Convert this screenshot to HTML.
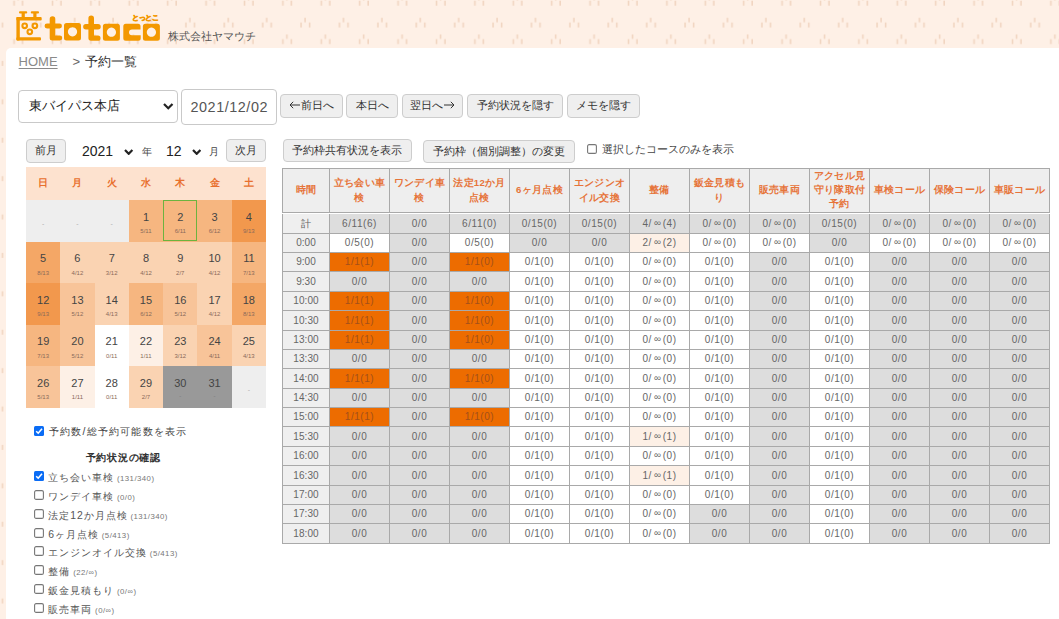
<!DOCTYPE html>
<html lang="ja"><head><meta charset="utf-8"><title>予約一覧</title>
<style>
html,body{margin:0;padding:0}
body{width:1059px;height:619px;overflow:hidden;position:relative;font-family:"Liberation Sans", sans-serif;background:#fef0e6}
.b{position:absolute;display:block}
.t{position:absolute;white-space:nowrap}
.btn{position:absolute;box-sizing:border-box;border:1px solid #cdcdcd;border-radius:4px;background:#efefef;color:#333;text-align:center;white-space:nowrap}
</style></head><body>
<svg class="b" style="left:0;top:0" width="1059" height="619"><defs><pattern id="p" x="-1.2" y="0" width="38.4" height="38.4" patternUnits="userSpaceOnUse">
<g fill="#f1d5c1">
<rect x="14.5" y="0.7" width="1.6" height="5"/><rect x="18.5" y="-4" width="1.6" height="4.5"/><rect x="23" y="0.7" width="1.6" height="5"/>
<rect x="14.5" y="39.1" width="1.6" height="5"/><rect x="18.5" y="34.4" width="1.6" height="4.5"/><rect x="23" y="39.1" width="1.6" height="5"/>
<rect x="32.7" y="22.5" width="1.6" height="5"/><rect x="36.7" y="17.8" width="1.6" height="4.5"/><rect x="41.2" y="22.5" width="1.6" height="5"/>
<rect x="-5.7" y="22.5" width="1.6" height="5"/><rect x="-1.7" y="17.8" width="1.6" height="4.5"/><rect x="2.8" y="22.5" width="1.6" height="5"/>
</g></pattern></defs><rect width="1059" height="619" fill="#fef0e6"/><rect width="1059" height="619" fill="url(#p)"/></svg>
<svg class="b" style="left:0;top:0" width="170" height="48" viewBox="0 0 170 48">
<g fill="#f39800">
<rect x="16.4" y="17.1" width="25.3" height="3.4" rx="1"/>
<rect x="16.4" y="17.1" width="3.4" height="23.4" rx="1"/>
<rect x="16.4" y="37.3" width="24.6" height="3.3" rx="1"/>
<rect x="21.6" y="12" width="3.2" height="6"/>
<rect x="33.3" y="12" width="3.2" height="6"/>
<rect x="19" y="11.3" width="8.2" height="2.3" rx="1"/>
<rect x="30.8" y="11.3" width="8.2" height="2.3" rx="1"/>
</g>
<g fill="none" stroke="#f39800" stroke-width="2.1">
<circle cx="24.7" cy="25.8" r="2.3"/><circle cx="34.9" cy="25.8" r="2.3"/><circle cx="29.8" cy="31.8" r="2.3"/>
</g>
<g fill="#f39800">
<path d="M49.7 19 a2.8 2.8 0 0 1 5.6 0 V23.5 H59.5 a2.4 2.4 0 0 1 0 4.9 H55.3 V35.6 H59.8 a2.45 2.45 0 0 1 0 4.9 H52.2 a2.5 2.5 0 0 1 -2.5 -2.5 V28.4 H47 a2.45 2.45 0 0 1 0 -4.9 H49.7 Z"/>
<path d="M88.4 18.4 a2.8 2.8 0 0 1 5.6 0 V24.1 H98 a2.7 2.7 0 0 1 0 5.5 H94 V35.6 H98 a2.55 2.55 0 0 1 0 5.1 H91 a2.6 2.6 0 0 1 -2.6 -2.6 V29.6 H85.9 a2.75 2.75 0 0 1 0 -5.5 H88.4 Z"/>
<path fill-rule="evenodd" d="M66.5 23.1 H78.5 a2.5 2.5 0 0 1 2.5 2.5 V38 a2.5 2.5 0 0 1 -2.5 2.5 H66.5 a2.5 2.5 0 0 1 -2.5 -2.5 V25.6 a2.5 2.5 0 0 1 2.5 -2.5 Z M72.5 27.2 a4.6 4.6 0 1 0 0.01 0 Z"/>
<path fill-rule="evenodd" d="M105.4 23.7 H117.4 a2.5 2.5 0 0 1 2.5 2.5 V38.2 a2.5 2.5 0 0 1 -2.5 2.5 H105.4 a2.5 2.5 0 0 1 -2.5 -2.5 V26.2 a2.5 2.5 0 0 1 2.5 -2.5 Z M111.4 27.6 a4.6 4.6 0 1 0 0.01 0 Z"/>
<path d="M125.8 23.7 H138 a2.5 2.5 0 0 1 2.5 2.5 V29.6 H132 a3 3 0 0 0 -3 3 V32.2 a3 3 0 0 0 3 3 H140.7 V38.2 a2.5 2.5 0 0 1 -2.5 2.5 H125.8 a2.5 2.5 0 0 1 -2.5 -2.5 V26.2 a2.5 2.5 0 0 1 2.5 -2.5 Z"/>
<path fill-rule="evenodd" d="M145.4 23.7 H157.4 a2.5 2.5 0 0 1 2.5 2.5 V38.2 a2.5 2.5 0 0 1 -2.5 2.5 H145.4 a2.5 2.5 0 0 1 -2.5 -2.5 V26.2 a2.5 2.5 0 0 1 2.5 -2.5 Z M151.4 27.6 a4.6 4.6 0 1 0 0.01 0 Z"/>
</g>
<text x="131.8" y="19.6" font-size="7.4" font-weight="bold" fill="#f39800" stroke="#f39800" stroke-width="0.6" font-family="Liberation Sans" letter-spacing="-0.2">とっとこ</text>
</svg>
<div class="t" style="left:167.8px;top:29px;font-size:11px;line-height:14px;color:#555;letter-spacing:0px;">株式会社ヤマウチ</div>
<div class="b" style="left:6px;top:48px;width:1060px;height:580px;background:#fff;border-top-left-radius:5px"></div>
<div class="t" style="left:18.6px;top:53.5px;font-size:13px;line-height:16px;color:#8a8a8a;letter-spacing:0px;"><span style="text-decoration:underline;text-underline-offset:2px">HOME</span></div>
<div class="t" style="left:72.5px;top:53.5px;font-size:13px;line-height:16px;color:#666;letter-spacing:0px;">&gt;</div>
<div class="t" style="left:85.3px;top:53.5px;font-size:13px;line-height:16px;color:#333;letter-spacing:0px;">予約一覧</div>
<div class="b" style="left:18px;top:90px;width:159.5px;height:32.5px;border:1px solid #c9c9c9;border-radius:4px;box-sizing:border-box;background:#fff"></div>
<div class="t" style="left:28.8px;top:98.2px;font-size:12.6px;line-height:16px;color:#222;letter-spacing:0px;">東バイパス本店</div>
<svg class="b" style="left:163px;top:103px" width="10.5" height="6.5" viewBox="0 0 10.5 6.5"><path d="M1 1 L5.25 5.3 L9.5 1" fill="none" stroke="#222" stroke-width="2.2" stroke-linecap="butt"/></svg>
<div class="b" style="left:181px;top:89.3px;width:95.5px;height:35.3px;border:1px solid #c9c9c9;border-radius:4px;box-sizing:border-box;background:#fff"></div>
<div class="t" style="left:190.5px;top:98.5px;font-size:14.4px;line-height:17px;color:#555;letter-spacing:0.55px;">2021/12/02</div>
<div class="btn" style="left:280.4px;top:94.3px;width:62.200000000000045px;height:23.299999999999997px;font-size:11.2px;line-height:20.299999999999997px;letter-spacing:0px"><svg width="11" height="8" style="vertical-align:0px;margin-right:0.5px" viewBox="0 0 11 8"><path d="M1 4H11M4.2 0.8L1 4L4.2 7.2" fill="none" stroke="#333" stroke-width="1"/></svg>前日へ</div>
<div class="btn" style="left:346.4px;top:94.3px;width:51.80000000000001px;height:23.299999999999997px;font-size:11.2px;line-height:20.299999999999997px;letter-spacing:0px">本日へ</div>
<div class="btn" style="left:401.5px;top:94.3px;width:61.89999999999998px;height:23.299999999999997px;font-size:11.2px;line-height:20.299999999999997px;letter-spacing:0px">翌日へ<svg width="11" height="8" style="vertical-align:0px;margin-left:0.5px" viewBox="0 0 11 8"><path d="M0 4H10M6.8 0.8L10 4L6.8 7.2" fill="none" stroke="#333" stroke-width="1"/></svg></div>
<div class="btn" style="left:467.2px;top:94.3px;width:96.30000000000001px;height:23.299999999999997px;font-size:11.2px;line-height:20.299999999999997px;letter-spacing:0px">予約状況を隠す</div>
<div class="btn" style="left:567.3px;top:94.3px;width:73.0px;height:23.299999999999997px;font-size:11.2px;line-height:20.299999999999997px;letter-spacing:0px">メモを隠す</div>
<div class="btn" style="left:26.1px;top:139.3px;width:39.6px;height:23.299999999999983px;font-size:11.2px;line-height:20.299999999999983px;letter-spacing:0px">前月</div>
<div class="t" style="left:82px;top:143px;font-size:14px;line-height:16px;color:#222;letter-spacing:0px;">2021</div>
<svg class="b" style="left:124.3px;top:148.5px" width="9.399999999999991" height="6.0" viewBox="0 0 9.399999999999991 6.0"><path d="M1 1 L4.699999999999996 4.8 L8.399999999999991 1" fill="none" stroke="#222" stroke-width="2.2" stroke-linecap="butt"/></svg>
<div class="t" style="left:142px;top:145.5px;font-size:10px;line-height:12px;color:#444;letter-spacing:0px;">年</div>
<div class="t" style="left:166px;top:143px;font-size:14px;line-height:16px;color:#222;letter-spacing:0px;">12</div>
<svg class="b" style="left:191.6px;top:148.5px" width="9.400000000000006" height="6.0" viewBox="0 0 9.400000000000006 6.0"><path d="M1 1 L4.700000000000003 4.8 L8.400000000000006 1" fill="none" stroke="#222" stroke-width="2.2" stroke-linecap="butt"/></svg>
<div class="t" style="left:209px;top:145.5px;font-size:10px;line-height:12px;color:#444;letter-spacing:0px;">月</div>
<div class="btn" style="left:226.3px;top:139.2px;width:39.39999999999998px;height:23.0px;font-size:11.2px;line-height:20.0px;letter-spacing:0px">次月</div>
<div class="btn" style="left:282.5px;top:139.3px;width:129.10000000000002px;height:23.099999999999994px;font-size:11.2px;line-height:20.099999999999994px;letter-spacing:0px">予約枠共有状況を表示</div>
<div class="btn" style="left:423.3px;top:139.6px;width:152.09999999999997px;height:23.0px;font-size:11.2px;line-height:20.0px;letter-spacing:0px">予約枠（個別調整）の変更</div>
<svg class="b" style="left:587px;top:144px" width="10" height="10" viewBox="0 0 10 10"><rect x="0.6" y="0.6" width="8.8" height="8.8" rx="1.5" fill="#fff" stroke="#777" stroke-width="1.1"/></svg>
<div class="t" style="left:601.5px;top:143px;font-size:11px;line-height:13px;color:#444;letter-spacing:0px;">選択したコースのみを表示</div>
<div class="b" style="left:26px;top:167px;width:240px;height:33px;background:#fde2cf"></div>
<div class="t" style="left:26.0px;top:175.5px;width:34.285714285714285px;text-align:center;font-size:10.4px;line-height:13px;color:#e8702e;letter-spacing:0px;font-weight:bold;">日</div>
<div class="t" style="left:60.285714285714285px;top:175.5px;width:34.285714285714285px;text-align:center;font-size:10.4px;line-height:13px;color:#e8702e;letter-spacing:0px;font-weight:bold;">月</div>
<div class="t" style="left:94.57142857142857px;top:175.5px;width:34.285714285714285px;text-align:center;font-size:10.4px;line-height:13px;color:#e8702e;letter-spacing:0px;font-weight:bold;">火</div>
<div class="t" style="left:128.85714285714286px;top:175.5px;width:34.285714285714285px;text-align:center;font-size:10.4px;line-height:13px;color:#e8702e;letter-spacing:0px;font-weight:bold;">水</div>
<div class="t" style="left:163.14285714285714px;top:175.5px;width:34.285714285714285px;text-align:center;font-size:10.4px;line-height:13px;color:#e8702e;letter-spacing:0px;font-weight:bold;">木</div>
<div class="t" style="left:197.42857142857142px;top:175.5px;width:34.285714285714285px;text-align:center;font-size:10.4px;line-height:13px;color:#e8702e;letter-spacing:0px;font-weight:bold;">金</div>
<div class="t" style="left:231.71428571428572px;top:175.5px;width:34.285714285714285px;text-align:center;font-size:10.4px;line-height:13px;color:#e8702e;letter-spacing:0px;font-weight:bold;">土</div>
<div class="b" style="left:26.0px;top:200.0px;width:34.58571428571428px;height:41.9px;background:#eeeeee"></div>
<div class="t" style="left:26.0px;top:219.0px;width:34.285714285714285px;text-align:center;font-size:7px;line-height:9px;color:#b0b0b0;letter-spacing:0px;">-</div>
<div class="b" style="left:60.285714285714285px;top:200.0px;width:34.58571428571428px;height:41.9px;background:#eeeeee"></div>
<div class="t" style="left:60.285714285714285px;top:219.0px;width:34.285714285714285px;text-align:center;font-size:7px;line-height:9px;color:#b0b0b0;letter-spacing:0px;">-</div>
<div class="b" style="left:94.57142857142857px;top:200.0px;width:34.58571428571428px;height:41.9px;background:#eeeeee"></div>
<div class="t" style="left:94.57142857142857px;top:219.0px;width:34.285714285714285px;text-align:center;font-size:7px;line-height:9px;color:#b0b0b0;letter-spacing:0px;">-</div>
<div class="b" style="left:128.85714285714286px;top:200.0px;width:34.58571428571428px;height:41.9px;background:rgb(246,182,128)"></div>
<div class="t" style="left:128.85714285714286px;top:210.5px;width:34.285714285714285px;text-align:center;font-size:11px;line-height:13px;color:#444;letter-spacing:0px;">1</div>
<div class="t" style="left:128.85714285714286px;top:228.0px;width:34.285714285714285px;text-align:center;font-size:6px;line-height:7px;color:#8a6a5a;letter-spacing:0px;">5/11</div>
<div class="b" style="left:163.14285714285714px;top:200.0px;width:34.58571428571428px;height:41.9px;background:rgb(246,182,128)"></div>
<div class="t" style="left:163.14285714285714px;top:210.5px;width:34.285714285714285px;text-align:center;font-size:11px;line-height:13px;color:#444;letter-spacing:0px;">2</div>
<div class="t" style="left:163.14285714285714px;top:228.0px;width:34.285714285714285px;text-align:center;font-size:6px;line-height:7px;color:#8a6a5a;letter-spacing:0px;">6/11</div>
<div class="b" style="left:197.42857142857142px;top:200.0px;width:34.58571428571428px;height:41.9px;background:rgb(246,182,128)"></div>
<div class="t" style="left:197.42857142857142px;top:210.5px;width:34.285714285714285px;text-align:center;font-size:11px;line-height:13px;color:#444;letter-spacing:0px;">3</div>
<div class="t" style="left:197.42857142857142px;top:228.0px;width:34.285714285714285px;text-align:center;font-size:6px;line-height:7px;color:#8a6a5a;letter-spacing:0px;">6/12</div>
<div class="b" style="left:231.71428571428572px;top:200.0px;width:34.58571428571428px;height:41.9px;background:rgb(242,152,77)"></div>
<div class="t" style="left:231.71428571428572px;top:210.5px;width:34.285714285714285px;text-align:center;font-size:11px;line-height:13px;color:#444;letter-spacing:0px;">4</div>
<div class="t" style="left:231.71428571428572px;top:228.0px;width:34.285714285714285px;text-align:center;font-size:6px;line-height:7px;color:#8a6a5a;letter-spacing:0px;">9/13</div>
<div class="b" style="left:26.0px;top:241.6px;width:34.58571428571428px;height:41.9px;background:rgb(244,167,102)"></div>
<div class="t" style="left:26.0px;top:252.1px;width:34.285714285714285px;text-align:center;font-size:11px;line-height:13px;color:#444;letter-spacing:0px;">5</div>
<div class="t" style="left:26.0px;top:269.6px;width:34.285714285714285px;text-align:center;font-size:6px;line-height:7px;color:#8a6a5a;letter-spacing:0px;">8/13</div>
<div class="b" style="left:60.285714285714285px;top:241.6px;width:34.58571428571428px;height:41.9px;background:rgb(250,211,178)"></div>
<div class="t" style="left:60.285714285714285px;top:252.1px;width:34.285714285714285px;text-align:center;font-size:11px;line-height:13px;color:#444;letter-spacing:0px;">6</div>
<div class="t" style="left:60.285714285714285px;top:269.6px;width:34.285714285714285px;text-align:center;font-size:6px;line-height:7px;color:#8a6a5a;letter-spacing:0px;">4/12</div>
<div class="b" style="left:94.57142857142857px;top:241.6px;width:34.58571428571428px;height:41.9px;background:rgb(250,211,178)"></div>
<div class="t" style="left:94.57142857142857px;top:252.1px;width:34.285714285714285px;text-align:center;font-size:11px;line-height:13px;color:#444;letter-spacing:0px;">7</div>
<div class="t" style="left:94.57142857142857px;top:269.6px;width:34.285714285714285px;text-align:center;font-size:6px;line-height:7px;color:#8a6a5a;letter-spacing:0px;">3/12</div>
<div class="b" style="left:128.85714285714286px;top:241.6px;width:34.58571428571428px;height:41.9px;background:rgb(250,211,178)"></div>
<div class="t" style="left:128.85714285714286px;top:252.1px;width:34.285714285714285px;text-align:center;font-size:11px;line-height:13px;color:#444;letter-spacing:0px;">8</div>
<div class="t" style="left:128.85714285714286px;top:269.6px;width:34.285714285714285px;text-align:center;font-size:6px;line-height:7px;color:#8a6a5a;letter-spacing:0px;">4/12</div>
<div class="b" style="left:163.14285714285714px;top:241.6px;width:34.58571428571428px;height:41.9px;background:rgb(250,211,178)"></div>
<div class="t" style="left:163.14285714285714px;top:252.1px;width:34.285714285714285px;text-align:center;font-size:11px;line-height:13px;color:#444;letter-spacing:0px;">9</div>
<div class="t" style="left:163.14285714285714px;top:269.6px;width:34.285714285714285px;text-align:center;font-size:6px;line-height:7px;color:#8a6a5a;letter-spacing:0px;">2/7</div>
<div class="b" style="left:197.42857142857142px;top:241.6px;width:34.58571428571428px;height:41.9px;background:rgb(250,211,178)"></div>
<div class="t" style="left:197.42857142857142px;top:252.1px;width:34.285714285714285px;text-align:center;font-size:11px;line-height:13px;color:#444;letter-spacing:0px;">10</div>
<div class="t" style="left:197.42857142857142px;top:269.6px;width:34.285714285714285px;text-align:center;font-size:6px;line-height:7px;color:#8a6a5a;letter-spacing:0px;">4/12</div>
<div class="b" style="left:231.71428571428572px;top:241.6px;width:34.58571428571428px;height:41.9px;background:rgb(246,182,128)"></div>
<div class="t" style="left:231.71428571428572px;top:252.1px;width:34.285714285714285px;text-align:center;font-size:11px;line-height:13px;color:#444;letter-spacing:0px;">11</div>
<div class="t" style="left:231.71428571428572px;top:269.6px;width:34.285714285714285px;text-align:center;font-size:6px;line-height:7px;color:#8a6a5a;letter-spacing:0px;">7/13</div>
<div class="b" style="left:26.0px;top:283.2px;width:34.58571428571428px;height:41.9px;background:rgb(242,152,77)"></div>
<div class="t" style="left:26.0px;top:293.7px;width:34.285714285714285px;text-align:center;font-size:11px;line-height:13px;color:#444;letter-spacing:0px;">12</div>
<div class="t" style="left:26.0px;top:311.2px;width:34.285714285714285px;text-align:center;font-size:6px;line-height:7px;color:#8a6a5a;letter-spacing:0px;">9/13</div>
<div class="b" style="left:60.285714285714285px;top:283.2px;width:34.58571428571428px;height:41.9px;background:rgb(248,196,153)"></div>
<div class="t" style="left:60.285714285714285px;top:293.7px;width:34.285714285714285px;text-align:center;font-size:11px;line-height:13px;color:#444;letter-spacing:0px;">13</div>
<div class="t" style="left:60.285714285714285px;top:311.2px;width:34.285714285714285px;text-align:center;font-size:6px;line-height:7px;color:#8a6a5a;letter-spacing:0px;">5/12</div>
<div class="b" style="left:94.57142857142857px;top:283.2px;width:34.58571428571428px;height:41.9px;background:rgb(250,211,178)"></div>
<div class="t" style="left:94.57142857142857px;top:293.7px;width:34.285714285714285px;text-align:center;font-size:11px;line-height:13px;color:#444;letter-spacing:0px;">14</div>
<div class="t" style="left:94.57142857142857px;top:311.2px;width:34.285714285714285px;text-align:center;font-size:6px;line-height:7px;color:#8a6a5a;letter-spacing:0px;">4/13</div>
<div class="b" style="left:128.85714285714286px;top:283.2px;width:34.58571428571428px;height:41.9px;background:rgb(246,182,128)"></div>
<div class="t" style="left:128.85714285714286px;top:293.7px;width:34.285714285714285px;text-align:center;font-size:11px;line-height:13px;color:#444;letter-spacing:0px;">15</div>
<div class="t" style="left:128.85714285714286px;top:311.2px;width:34.285714285714285px;text-align:center;font-size:6px;line-height:7px;color:#8a6a5a;letter-spacing:0px;">6/12</div>
<div class="b" style="left:163.14285714285714px;top:283.2px;width:34.58571428571428px;height:41.9px;background:rgb(248,196,153)"></div>
<div class="t" style="left:163.14285714285714px;top:293.7px;width:34.285714285714285px;text-align:center;font-size:11px;line-height:13px;color:#444;letter-spacing:0px;">16</div>
<div class="t" style="left:163.14285714285714px;top:311.2px;width:34.285714285714285px;text-align:center;font-size:6px;line-height:7px;color:#8a6a5a;letter-spacing:0px;">5/12</div>
<div class="b" style="left:197.42857142857142px;top:283.2px;width:34.58571428571428px;height:41.9px;background:rgb(250,211,178)"></div>
<div class="t" style="left:197.42857142857142px;top:293.7px;width:34.285714285714285px;text-align:center;font-size:11px;line-height:13px;color:#444;letter-spacing:0px;">17</div>
<div class="t" style="left:197.42857142857142px;top:311.2px;width:34.285714285714285px;text-align:center;font-size:6px;line-height:7px;color:#8a6a5a;letter-spacing:0px;">4/12</div>
<div class="b" style="left:231.71428571428572px;top:283.2px;width:34.58571428571428px;height:41.9px;background:rgb(244,167,102)"></div>
<div class="t" style="left:231.71428571428572px;top:293.7px;width:34.285714285714285px;text-align:center;font-size:11px;line-height:13px;color:#444;letter-spacing:0px;">18</div>
<div class="t" style="left:231.71428571428572px;top:311.2px;width:34.285714285714285px;text-align:center;font-size:6px;line-height:7px;color:#8a6a5a;letter-spacing:0px;">8/13</div>
<div class="b" style="left:26.0px;top:324.8px;width:34.58571428571428px;height:41.9px;background:rgb(246,182,128)"></div>
<div class="t" style="left:26.0px;top:335.3px;width:34.285714285714285px;text-align:center;font-size:11px;line-height:13px;color:#444;letter-spacing:0px;">19</div>
<div class="t" style="left:26.0px;top:352.8px;width:34.285714285714285px;text-align:center;font-size:6px;line-height:7px;color:#8a6a5a;letter-spacing:0px;">7/13</div>
<div class="b" style="left:60.285714285714285px;top:324.8px;width:34.58571428571428px;height:41.9px;background:rgb(248,196,153)"></div>
<div class="t" style="left:60.285714285714285px;top:335.3px;width:34.285714285714285px;text-align:center;font-size:11px;line-height:13px;color:#444;letter-spacing:0px;">20</div>
<div class="t" style="left:60.285714285714285px;top:352.8px;width:34.285714285714285px;text-align:center;font-size:6px;line-height:7px;color:#8a6a5a;letter-spacing:0px;">5/12</div>
<div class="b" style="left:94.57142857142857px;top:324.8px;width:34.58571428571428px;height:41.9px;background:rgb(255,255,255)"></div>
<div class="t" style="left:94.57142857142857px;top:335.3px;width:34.285714285714285px;text-align:center;font-size:11px;line-height:13px;color:#444;letter-spacing:0px;">21</div>
<div class="t" style="left:94.57142857142857px;top:352.8px;width:34.285714285714285px;text-align:center;font-size:6px;line-height:7px;color:#8a6a5a;letter-spacing:0px;">0/11</div>
<div class="b" style="left:128.85714285714286px;top:324.8px;width:34.58571428571428px;height:41.9px;background:rgb(253,240,230)"></div>
<div class="t" style="left:128.85714285714286px;top:335.3px;width:34.285714285714285px;text-align:center;font-size:11px;line-height:13px;color:#444;letter-spacing:0px;">22</div>
<div class="t" style="left:128.85714285714286px;top:352.8px;width:34.285714285714285px;text-align:center;font-size:6px;line-height:7px;color:#8a6a5a;letter-spacing:0px;">1/11</div>
<div class="b" style="left:163.14285714285714px;top:324.8px;width:34.58571428571428px;height:41.9px;background:rgb(250,211,178)"></div>
<div class="t" style="left:163.14285714285714px;top:335.3px;width:34.285714285714285px;text-align:center;font-size:11px;line-height:13px;color:#444;letter-spacing:0px;">23</div>
<div class="t" style="left:163.14285714285714px;top:352.8px;width:34.285714285714285px;text-align:center;font-size:6px;line-height:7px;color:#8a6a5a;letter-spacing:0px;">3/12</div>
<div class="b" style="left:197.42857142857142px;top:324.8px;width:34.58571428571428px;height:41.9px;background:rgb(248,196,153)"></div>
<div class="t" style="left:197.42857142857142px;top:335.3px;width:34.285714285714285px;text-align:center;font-size:11px;line-height:13px;color:#444;letter-spacing:0px;">24</div>
<div class="t" style="left:197.42857142857142px;top:352.8px;width:34.285714285714285px;text-align:center;font-size:6px;line-height:7px;color:#8a6a5a;letter-spacing:0px;">4/11</div>
<div class="b" style="left:231.71428571428572px;top:324.8px;width:34.58571428571428px;height:41.9px;background:rgb(250,211,178)"></div>
<div class="t" style="left:231.71428571428572px;top:335.3px;width:34.285714285714285px;text-align:center;font-size:11px;line-height:13px;color:#444;letter-spacing:0px;">25</div>
<div class="t" style="left:231.71428571428572px;top:352.8px;width:34.285714285714285px;text-align:center;font-size:6px;line-height:7px;color:#8a6a5a;letter-spacing:0px;">4/13</div>
<div class="b" style="left:26.0px;top:366.4px;width:34.58571428571428px;height:41.9px;background:rgb(248,196,153)"></div>
<div class="t" style="left:26.0px;top:376.9px;width:34.285714285714285px;text-align:center;font-size:11px;line-height:13px;color:#444;letter-spacing:0px;">26</div>
<div class="t" style="left:26.0px;top:394.4px;width:34.285714285714285px;text-align:center;font-size:6px;line-height:7px;color:#8a6a5a;letter-spacing:0px;">5/13</div>
<div class="b" style="left:60.285714285714285px;top:366.4px;width:34.58571428571428px;height:41.9px;background:rgb(253,240,230)"></div>
<div class="t" style="left:60.285714285714285px;top:376.9px;width:34.285714285714285px;text-align:center;font-size:11px;line-height:13px;color:#444;letter-spacing:0px;">27</div>
<div class="t" style="left:60.285714285714285px;top:394.4px;width:34.285714285714285px;text-align:center;font-size:6px;line-height:7px;color:#8a6a5a;letter-spacing:0px;">1/11</div>
<div class="b" style="left:94.57142857142857px;top:366.4px;width:34.58571428571428px;height:41.9px;background:rgb(255,255,255)"></div>
<div class="t" style="left:94.57142857142857px;top:376.9px;width:34.285714285714285px;text-align:center;font-size:11px;line-height:13px;color:#444;letter-spacing:0px;">28</div>
<div class="t" style="left:94.57142857142857px;top:394.4px;width:34.285714285714285px;text-align:center;font-size:6px;line-height:7px;color:#8a6a5a;letter-spacing:0px;">0/11</div>
<div class="b" style="left:128.85714285714286px;top:366.4px;width:34.58571428571428px;height:41.9px;background:rgb(250,211,178)"></div>
<div class="t" style="left:128.85714285714286px;top:376.9px;width:34.285714285714285px;text-align:center;font-size:11px;line-height:13px;color:#444;letter-spacing:0px;">29</div>
<div class="t" style="left:128.85714285714286px;top:394.4px;width:34.285714285714285px;text-align:center;font-size:6px;line-height:7px;color:#8a6a5a;letter-spacing:0px;">2/7</div>
<div class="b" style="left:163.14285714285714px;top:366.4px;width:34.58571428571428px;height:41.9px;background:#999999"></div>
<div class="t" style="left:163.14285714285714px;top:377.4px;width:34.285714285714285px;text-align:center;font-size:11px;line-height:13px;color:#444;letter-spacing:0px;">30</div>
<div class="t" style="left:163.14285714285714px;top:392.4px;width:34.285714285714285px;text-align:center;font-size:6px;line-height:8px;color:#777;letter-spacing:0px;">-</div>
<div class="b" style="left:197.42857142857142px;top:366.4px;width:34.58571428571428px;height:41.9px;background:#999999"></div>
<div class="t" style="left:197.42857142857142px;top:377.4px;width:34.285714285714285px;text-align:center;font-size:11px;line-height:13px;color:#444;letter-spacing:0px;">31</div>
<div class="t" style="left:197.42857142857142px;top:392.4px;width:34.285714285714285px;text-align:center;font-size:6px;line-height:8px;color:#777;letter-spacing:0px;">-</div>
<div class="b" style="left:231.71428571428572px;top:366.4px;width:34.58571428571428px;height:41.9px;background:#eeeeee"></div>
<div class="t" style="left:231.71428571428572px;top:385.4px;width:34.285714285714285px;text-align:center;font-size:7px;line-height:9px;color:#b0b0b0;letter-spacing:0px;">-</div>
<div class="b" style="left:163.1px;top:200.3px;width:33.8px;height:40.8px;border:1px solid #6cb33f;box-sizing:border-box"></div>
<svg class="b" style="left:34px;top:426px" width="10" height="10" viewBox="0 0 10 10"><rect x="0" y="0" width="10" height="10" rx="1.5" fill="#0a6cf5"/><path d="M2.2 5.2 L4.2 7.2 L8 2.8" fill="none" stroke="#fff" stroke-width="1.6"/></svg>
<div class="t" style="left:49px;top:424.5px;font-size:10.4px;line-height:13px;color:#444;letter-spacing:1.2px;">予約数/総予約可能数を表示</div>
<div class="t" style="left:85.5px;top:450.5px;font-size:10.4px;line-height:13px;color:#333;letter-spacing:0.75px;font-weight:bold;">予約状況の確認</div>
<svg class="b" style="left:34px;top:471px" width="10" height="10" viewBox="0 0 10 10"><rect x="0" y="0" width="10" height="10" rx="1.5" fill="#0a6cf5"/><path d="M2.2 5.2 L4.2 7.2 L8 2.8" fill="none" stroke="#fff" stroke-width="1.6"/></svg>
<div class="t" style="left:48.3px;top:470.8px;font-size:10.4px;line-height:13px;color:#555;letter-spacing:0.95px">立ち会い車検<span style="font-size:7.8px;letter-spacing:0.45px;color:#777;margin-left:3px">(131/340)</span></div>
<svg class="b" style="left:34px;top:490px" width="10" height="10" viewBox="0 0 10 10"><rect x="0.6" y="0.6" width="8.8" height="8.8" rx="1.5" fill="#fff" stroke="#777" stroke-width="1.1"/></svg>
<div class="t" style="left:48.3px;top:490.0px;font-size:10.4px;line-height:13px;color:#555;letter-spacing:0.95px">ワンデイ車検<span style="font-size:7.8px;letter-spacing:0.45px;color:#777;margin-left:3px">(0/0)</span></div>
<svg class="b" style="left:34px;top:509px" width="10" height="10" viewBox="0 0 10 10"><rect x="0.6" y="0.6" width="8.8" height="8.8" rx="1.5" fill="#fff" stroke="#777" stroke-width="1.1"/></svg>
<div class="t" style="left:48.3px;top:509.1px;font-size:10.4px;line-height:13px;color:#555;letter-spacing:0.95px">法定12か月点検<span style="font-size:7.8px;letter-spacing:0.45px;color:#777;margin-left:3px">(131/340)</span></div>
<svg class="b" style="left:34px;top:528px" width="10" height="10" viewBox="0 0 10 10"><rect x="0.6" y="0.6" width="8.8" height="8.8" rx="1.5" fill="#fff" stroke="#777" stroke-width="1.1"/></svg>
<div class="t" style="left:48.3px;top:527.8px;font-size:10.4px;line-height:13px;color:#555;letter-spacing:0.95px">6ヶ月点検<span style="font-size:7.8px;letter-spacing:0.45px;color:#777;margin-left:3px">(5/413)</span></div>
<svg class="b" style="left:34px;top:546px" width="10" height="10" viewBox="0 0 10 10"><rect x="0.6" y="0.6" width="8.8" height="8.8" rx="1.5" fill="#fff" stroke="#777" stroke-width="1.1"/></svg>
<div class="t" style="left:48.3px;top:546.4px;font-size:10.4px;line-height:13px;color:#555;letter-spacing:0.95px">エンジンオイル交換<span style="font-size:7.8px;letter-spacing:0.45px;color:#777;margin-left:3px">(5/413)</span></div>
<svg class="b" style="left:34px;top:565px" width="10" height="10" viewBox="0 0 10 10"><rect x="0.6" y="0.6" width="8.8" height="8.8" rx="1.5" fill="#fff" stroke="#777" stroke-width="1.1"/></svg>
<div class="t" style="left:48.3px;top:565.3px;font-size:10.4px;line-height:13px;color:#555;letter-spacing:0.95px">整備<span style="font-size:7.8px;letter-spacing:0.45px;color:#777;margin-left:3px">(22/∞)</span></div>
<svg class="b" style="left:34px;top:584px" width="10" height="10" viewBox="0 0 10 10"><rect x="0.6" y="0.6" width="8.8" height="8.8" rx="1.5" fill="#fff" stroke="#777" stroke-width="1.1"/></svg>
<div class="t" style="left:48.3px;top:584.3px;font-size:10.4px;line-height:13px;color:#555;letter-spacing:0.95px">鈑金見積もり<span style="font-size:7.8px;letter-spacing:0.45px;color:#777;margin-left:3px">(0/∞)</span></div>
<svg class="b" style="left:34px;top:603px" width="10" height="10" viewBox="0 0 10 10"><rect x="0.6" y="0.6" width="8.8" height="8.8" rx="1.5" fill="#fff" stroke="#777" stroke-width="1.1"/></svg>
<div class="t" style="left:48.3px;top:603.0px;font-size:10.4px;line-height:13px;color:#555;letter-spacing:0.95px">販売車両<span style="font-size:7.8px;letter-spacing:0.45px;color:#777;margin-left:3px">(0/∞)</span></div>
<div class="b" style="left:282px;top:168px;width:768px;height:45px;background:#eeeeee"></div>
<div class="t" style="left:283px;top:183.0px;width:46px;text-align:center;font-size:9.6px;line-height:14.4px;color:#e6743a;letter-spacing:0.3px;font-weight:bold;">時間</div>
<div class="t" style="left:330px;top:174.6px;width:59px;text-align:center;font-size:9.6px;line-height:15.6px;color:#e6743a;letter-spacing:0.3px;font-weight:bold;">立ち会い車<br>検</div>
<div class="t" style="left:390px;top:174.6px;width:59px;text-align:center;font-size:9.6px;line-height:15.6px;color:#e6743a;letter-spacing:0.3px;font-weight:bold;">ワンデイ車<br>検</div>
<div class="t" style="left:450px;top:174.6px;width:59px;text-align:center;font-size:9.6px;line-height:15.6px;color:#e6743a;letter-spacing:0.3px;font-weight:bold;">法定12か月<br>点検</div>
<div class="t" style="left:510px;top:183.0px;width:59px;text-align:center;font-size:9.6px;line-height:14.4px;color:#e6743a;letter-spacing:0.3px;font-weight:bold;">6ヶ月点検</div>
<div class="t" style="left:570px;top:174.6px;width:59px;text-align:center;font-size:9.6px;line-height:15.6px;color:#e6743a;letter-spacing:0.3px;font-weight:bold;">エンジンオ<br>イル交換</div>
<div class="t" style="left:630px;top:183.0px;width:59px;text-align:center;font-size:9.6px;line-height:14.4px;color:#e6743a;letter-spacing:0.3px;font-weight:bold;">整備</div>
<div class="t" style="left:690px;top:174.6px;width:59px;text-align:center;font-size:9.6px;line-height:15.6px;color:#e6743a;letter-spacing:0.3px;font-weight:bold;">鈑金見積も<br>り</div>
<div class="t" style="left:750px;top:183.0px;width:59px;text-align:center;font-size:9.6px;line-height:14.4px;color:#e6743a;letter-spacing:0.3px;font-weight:bold;">販売車両</div>
<div class="t" style="left:810px;top:168.6px;width:59px;text-align:center;font-size:9.6px;line-height:14.4px;color:#e6743a;letter-spacing:0.3px;font-weight:bold;">アクセル見<br>守り隊取付<br>予約</div>
<div class="t" style="left:870px;top:183.0px;width:59px;text-align:center;font-size:9.6px;line-height:14.4px;color:#e6743a;letter-spacing:0.3px;font-weight:bold;">車検コール</div>
<div class="t" style="left:930px;top:183.0px;width:59px;text-align:center;font-size:9.6px;line-height:14.4px;color:#e6743a;letter-spacing:0.3px;font-weight:bold;">保険コール</div>
<div class="t" style="left:990px;top:183.0px;width:59px;text-align:center;font-size:9.6px;line-height:14.4px;color:#e6743a;letter-spacing:0.3px;font-weight:bold;">車販コール</div>
<div class="b" style="left:283px;top:214px;width:46px;height:19px;background:#efefef"></div>
<div class="t" style="left:283px;top:216.9px;width:46px;text-align:center;font-size:10px;line-height:13px;color:#666;letter-spacing:0.05px;">計</div>
<div class="b" style="left:330px;top:214px;width:59px;height:19px;background:#dddddd"></div>
<div class="t" style="left:330px;top:216.9px;width:59px;text-align:center;font-size:10px;line-height:13px;color:#666;letter-spacing:0.55px;">6/11(6)</div>
<div class="b" style="left:390px;top:214px;width:59px;height:19px;background:#dddddd"></div>
<div class="t" style="left:390px;top:216.9px;width:59px;text-align:center;font-size:10px;line-height:13px;color:#666;letter-spacing:0.55px;">0/0</div>
<div class="b" style="left:450px;top:214px;width:59px;height:19px;background:#dddddd"></div>
<div class="t" style="left:450px;top:216.9px;width:59px;text-align:center;font-size:10px;line-height:13px;color:#666;letter-spacing:0.55px;">6/11(0)</div>
<div class="b" style="left:510px;top:214px;width:59px;height:19px;background:#dddddd"></div>
<div class="t" style="left:510px;top:216.9px;width:59px;text-align:center;font-size:10px;line-height:13px;color:#666;letter-spacing:0.55px;">0/15(0)</div>
<div class="b" style="left:570px;top:214px;width:59px;height:19px;background:#dddddd"></div>
<div class="t" style="left:570px;top:216.9px;width:59px;text-align:center;font-size:10px;line-height:13px;color:#666;letter-spacing:0.55px;">0/15(0)</div>
<div class="b" style="left:630px;top:214px;width:59px;height:19px;background:#dddddd"></div>
<div class="t" style="left:630px;top:216.9px;width:59px;text-align:center;font-size:10px;line-height:13px;color:#666;letter-spacing:0.55px;">4/<span style="font-size:9.6px;margin:0 1.9px 0 2.1px;letter-spacing:0;position:relative;top:-1px">∞</span>(4)</div>
<div class="b" style="left:690px;top:214px;width:59px;height:19px;background:#dddddd"></div>
<div class="t" style="left:690px;top:216.9px;width:59px;text-align:center;font-size:10px;line-height:13px;color:#666;letter-spacing:0.55px;">0/<span style="font-size:9.6px;margin:0 1.9px 0 2.1px;letter-spacing:0;position:relative;top:-1px">∞</span>(0)</div>
<div class="b" style="left:750px;top:214px;width:59px;height:19px;background:#dddddd"></div>
<div class="t" style="left:750px;top:216.9px;width:59px;text-align:center;font-size:10px;line-height:13px;color:#666;letter-spacing:0.55px;">0/<span style="font-size:9.6px;margin:0 1.9px 0 2.1px;letter-spacing:0;position:relative;top:-1px">∞</span>(0)</div>
<div class="b" style="left:810px;top:214px;width:59px;height:19px;background:#dddddd"></div>
<div class="t" style="left:810px;top:216.9px;width:59px;text-align:center;font-size:10px;line-height:13px;color:#666;letter-spacing:0.55px;">0/15(0)</div>
<div class="b" style="left:870px;top:214px;width:59px;height:19px;background:#dddddd"></div>
<div class="t" style="left:870px;top:216.9px;width:59px;text-align:center;font-size:10px;line-height:13px;color:#666;letter-spacing:0.55px;">0/<span style="font-size:9.6px;margin:0 1.9px 0 2.1px;letter-spacing:0;position:relative;top:-1px">∞</span>(0)</div>
<div class="b" style="left:930px;top:214px;width:59px;height:19px;background:#dddddd"></div>
<div class="t" style="left:930px;top:216.9px;width:59px;text-align:center;font-size:10px;line-height:13px;color:#666;letter-spacing:0.55px;">0/<span style="font-size:9.6px;margin:0 1.9px 0 2.1px;letter-spacing:0;position:relative;top:-1px">∞</span>(0)</div>
<div class="b" style="left:990px;top:214px;width:59px;height:19px;background:#dddddd"></div>
<div class="t" style="left:990px;top:216.9px;width:59px;text-align:center;font-size:10px;line-height:13px;color:#666;letter-spacing:0.55px;">0/<span style="font-size:9.6px;margin:0 1.9px 0 2.1px;letter-spacing:0;position:relative;top:-1px">∞</span>(0)</div>
<div class="b" style="left:283px;top:234px;width:46px;height:18px;background:#efefef"></div>
<div class="t" style="left:283px;top:236.4px;width:46px;text-align:center;font-size:10px;line-height:13px;color:#666;letter-spacing:0.05px;">0:00</div>
<div class="b" style="left:330px;top:234px;width:59px;height:18px;background:#ffffff"></div>
<div class="t" style="left:330px;top:236.4px;width:59px;text-align:center;font-size:10px;line-height:13px;color:#666;letter-spacing:0.55px;">0/5(0)</div>
<div class="b" style="left:390px;top:234px;width:59px;height:18px;background:#dddddd"></div>
<div class="t" style="left:390px;top:236.4px;width:59px;text-align:center;font-size:10px;line-height:13px;color:#666;letter-spacing:0.55px;">0/0</div>
<div class="b" style="left:450px;top:234px;width:59px;height:18px;background:#ffffff"></div>
<div class="t" style="left:450px;top:236.4px;width:59px;text-align:center;font-size:10px;line-height:13px;color:#666;letter-spacing:0.55px;">0/5(0)</div>
<div class="b" style="left:510px;top:234px;width:59px;height:18px;background:#dddddd"></div>
<div class="t" style="left:510px;top:236.4px;width:59px;text-align:center;font-size:10px;line-height:13px;color:#666;letter-spacing:0.55px;">0/0</div>
<div class="b" style="left:570px;top:234px;width:59px;height:18px;background:#dddddd"></div>
<div class="t" style="left:570px;top:236.4px;width:59px;text-align:center;font-size:10px;line-height:13px;color:#666;letter-spacing:0.55px;">0/0</div>
<div class="b" style="left:630px;top:234px;width:59px;height:18px;background:rgb(253,240,230)"></div>
<div class="t" style="left:630px;top:236.4px;width:59px;text-align:center;font-size:10px;line-height:13px;color:#666;letter-spacing:0.55px;">2/<span style="font-size:9.6px;margin:0 1.9px 0 2.1px;letter-spacing:0;position:relative;top:-1px">∞</span>(2)</div>
<div class="b" style="left:690px;top:234px;width:59px;height:18px;background:#ffffff"></div>
<div class="t" style="left:690px;top:236.4px;width:59px;text-align:center;font-size:10px;line-height:13px;color:#666;letter-spacing:0.55px;">0/<span style="font-size:9.6px;margin:0 1.9px 0 2.1px;letter-spacing:0;position:relative;top:-1px">∞</span>(0)</div>
<div class="b" style="left:750px;top:234px;width:59px;height:18px;background:#ffffff"></div>
<div class="t" style="left:750px;top:236.4px;width:59px;text-align:center;font-size:10px;line-height:13px;color:#666;letter-spacing:0.55px;">0/<span style="font-size:9.6px;margin:0 1.9px 0 2.1px;letter-spacing:0;position:relative;top:-1px">∞</span>(0)</div>
<div class="b" style="left:810px;top:234px;width:59px;height:18px;background:#dddddd"></div>
<div class="t" style="left:810px;top:236.4px;width:59px;text-align:center;font-size:10px;line-height:13px;color:#666;letter-spacing:0.55px;">0/0</div>
<div class="b" style="left:870px;top:234px;width:59px;height:18px;background:#ffffff"></div>
<div class="t" style="left:870px;top:236.4px;width:59px;text-align:center;font-size:10px;line-height:13px;color:#666;letter-spacing:0.55px;">0/<span style="font-size:9.6px;margin:0 1.9px 0 2.1px;letter-spacing:0;position:relative;top:-1px">∞</span>(0)</div>
<div class="b" style="left:930px;top:234px;width:59px;height:18px;background:#ffffff"></div>
<div class="t" style="left:930px;top:236.4px;width:59px;text-align:center;font-size:10px;line-height:13px;color:#666;letter-spacing:0.55px;">0/<span style="font-size:9.6px;margin:0 1.9px 0 2.1px;letter-spacing:0;position:relative;top:-1px">∞</span>(0)</div>
<div class="b" style="left:990px;top:234px;width:59px;height:18px;background:#ffffff"></div>
<div class="t" style="left:990px;top:236.4px;width:59px;text-align:center;font-size:10px;line-height:13px;color:#666;letter-spacing:0.55px;">0/<span style="font-size:9.6px;margin:0 1.9px 0 2.1px;letter-spacing:0;position:relative;top:-1px">∞</span>(0)</div>
<div class="b" style="left:283px;top:253px;width:46px;height:18px;background:#efefef"></div>
<div class="t" style="left:283px;top:255.4px;width:46px;text-align:center;font-size:10px;line-height:13px;color:#666;letter-spacing:0.05px;">9:00</div>
<div class="b" style="left:330px;top:253px;width:59px;height:18px;background:rgb(237,108,0)"></div>
<div class="t" style="left:330px;top:255.4px;width:59px;text-align:center;font-size:10px;line-height:13px;color:#a4501a;letter-spacing:0.55px;">1/1(1)</div>
<div class="b" style="left:390px;top:253px;width:59px;height:18px;background:#dddddd"></div>
<div class="t" style="left:390px;top:255.4px;width:59px;text-align:center;font-size:10px;line-height:13px;color:#666;letter-spacing:0.55px;">0/0</div>
<div class="b" style="left:450px;top:253px;width:59px;height:18px;background:rgb(237,108,0)"></div>
<div class="t" style="left:450px;top:255.4px;width:59px;text-align:center;font-size:10px;line-height:13px;color:#a4501a;letter-spacing:0.55px;">1/1(0)</div>
<div class="b" style="left:510px;top:253px;width:59px;height:18px;background:#ffffff"></div>
<div class="t" style="left:510px;top:255.4px;width:59px;text-align:center;font-size:10px;line-height:13px;color:#666;letter-spacing:0.55px;">0/1(0)</div>
<div class="b" style="left:570px;top:253px;width:59px;height:18px;background:#ffffff"></div>
<div class="t" style="left:570px;top:255.4px;width:59px;text-align:center;font-size:10px;line-height:13px;color:#666;letter-spacing:0.55px;">0/1(0)</div>
<div class="b" style="left:630px;top:253px;width:59px;height:18px;background:#ffffff"></div>
<div class="t" style="left:630px;top:255.4px;width:59px;text-align:center;font-size:10px;line-height:13px;color:#666;letter-spacing:0.55px;">0/<span style="font-size:9.6px;margin:0 1.9px 0 2.1px;letter-spacing:0;position:relative;top:-1px">∞</span>(0)</div>
<div class="b" style="left:690px;top:253px;width:59px;height:18px;background:#ffffff"></div>
<div class="t" style="left:690px;top:255.4px;width:59px;text-align:center;font-size:10px;line-height:13px;color:#666;letter-spacing:0.55px;">0/1(0)</div>
<div class="b" style="left:750px;top:253px;width:59px;height:18px;background:#dddddd"></div>
<div class="t" style="left:750px;top:255.4px;width:59px;text-align:center;font-size:10px;line-height:13px;color:#666;letter-spacing:0.55px;">0/0</div>
<div class="b" style="left:810px;top:253px;width:59px;height:18px;background:#ffffff"></div>
<div class="t" style="left:810px;top:255.4px;width:59px;text-align:center;font-size:10px;line-height:13px;color:#666;letter-spacing:0.55px;">0/1(0)</div>
<div class="b" style="left:870px;top:253px;width:59px;height:18px;background:#dddddd"></div>
<div class="t" style="left:870px;top:255.4px;width:59px;text-align:center;font-size:10px;line-height:13px;color:#666;letter-spacing:0.55px;">0/0</div>
<div class="b" style="left:930px;top:253px;width:59px;height:18px;background:#dddddd"></div>
<div class="t" style="left:930px;top:255.4px;width:59px;text-align:center;font-size:10px;line-height:13px;color:#666;letter-spacing:0.55px;">0/0</div>
<div class="b" style="left:990px;top:253px;width:59px;height:18px;background:#dddddd"></div>
<div class="t" style="left:990px;top:255.4px;width:59px;text-align:center;font-size:10px;line-height:13px;color:#666;letter-spacing:0.55px;">0/0</div>
<div class="b" style="left:283px;top:272px;width:46px;height:19px;background:#efefef"></div>
<div class="t" style="left:283px;top:274.9px;width:46px;text-align:center;font-size:10px;line-height:13px;color:#666;letter-spacing:0.05px;">9:30</div>
<div class="b" style="left:330px;top:272px;width:59px;height:19px;background:#dddddd"></div>
<div class="t" style="left:330px;top:274.9px;width:59px;text-align:center;font-size:10px;line-height:13px;color:#666;letter-spacing:0.55px;">0/0</div>
<div class="b" style="left:390px;top:272px;width:59px;height:19px;background:#dddddd"></div>
<div class="t" style="left:390px;top:274.9px;width:59px;text-align:center;font-size:10px;line-height:13px;color:#666;letter-spacing:0.55px;">0/0</div>
<div class="b" style="left:450px;top:272px;width:59px;height:19px;background:#dddddd"></div>
<div class="t" style="left:450px;top:274.9px;width:59px;text-align:center;font-size:10px;line-height:13px;color:#666;letter-spacing:0.55px;">0/0</div>
<div class="b" style="left:510px;top:272px;width:59px;height:19px;background:#ffffff"></div>
<div class="t" style="left:510px;top:274.9px;width:59px;text-align:center;font-size:10px;line-height:13px;color:#666;letter-spacing:0.55px;">0/1(0)</div>
<div class="b" style="left:570px;top:272px;width:59px;height:19px;background:#ffffff"></div>
<div class="t" style="left:570px;top:274.9px;width:59px;text-align:center;font-size:10px;line-height:13px;color:#666;letter-spacing:0.55px;">0/1(0)</div>
<div class="b" style="left:630px;top:272px;width:59px;height:19px;background:#ffffff"></div>
<div class="t" style="left:630px;top:274.9px;width:59px;text-align:center;font-size:10px;line-height:13px;color:#666;letter-spacing:0.55px;">0/<span style="font-size:9.6px;margin:0 1.9px 0 2.1px;letter-spacing:0;position:relative;top:-1px">∞</span>(0)</div>
<div class="b" style="left:690px;top:272px;width:59px;height:19px;background:#ffffff"></div>
<div class="t" style="left:690px;top:274.9px;width:59px;text-align:center;font-size:10px;line-height:13px;color:#666;letter-spacing:0.55px;">0/1(0)</div>
<div class="b" style="left:750px;top:272px;width:59px;height:19px;background:#dddddd"></div>
<div class="t" style="left:750px;top:274.9px;width:59px;text-align:center;font-size:10px;line-height:13px;color:#666;letter-spacing:0.55px;">0/0</div>
<div class="b" style="left:810px;top:272px;width:59px;height:19px;background:#ffffff"></div>
<div class="t" style="left:810px;top:274.9px;width:59px;text-align:center;font-size:10px;line-height:13px;color:#666;letter-spacing:0.55px;">0/1(0)</div>
<div class="b" style="left:870px;top:272px;width:59px;height:19px;background:#dddddd"></div>
<div class="t" style="left:870px;top:274.9px;width:59px;text-align:center;font-size:10px;line-height:13px;color:#666;letter-spacing:0.55px;">0/0</div>
<div class="b" style="left:930px;top:272px;width:59px;height:19px;background:#dddddd"></div>
<div class="t" style="left:930px;top:274.9px;width:59px;text-align:center;font-size:10px;line-height:13px;color:#666;letter-spacing:0.55px;">0/0</div>
<div class="b" style="left:990px;top:272px;width:59px;height:19px;background:#dddddd"></div>
<div class="t" style="left:990px;top:274.9px;width:59px;text-align:center;font-size:10px;line-height:13px;color:#666;letter-spacing:0.55px;">0/0</div>
<div class="b" style="left:283px;top:292px;width:46px;height:18px;background:#efefef"></div>
<div class="t" style="left:283px;top:294.4px;width:46px;text-align:center;font-size:10px;line-height:13px;color:#666;letter-spacing:0.05px;">10:00</div>
<div class="b" style="left:330px;top:292px;width:59px;height:18px;background:rgb(237,108,0)"></div>
<div class="t" style="left:330px;top:294.4px;width:59px;text-align:center;font-size:10px;line-height:13px;color:#a4501a;letter-spacing:0.55px;">1/1(1)</div>
<div class="b" style="left:390px;top:292px;width:59px;height:18px;background:#dddddd"></div>
<div class="t" style="left:390px;top:294.4px;width:59px;text-align:center;font-size:10px;line-height:13px;color:#666;letter-spacing:0.55px;">0/0</div>
<div class="b" style="left:450px;top:292px;width:59px;height:18px;background:rgb(237,108,0)"></div>
<div class="t" style="left:450px;top:294.4px;width:59px;text-align:center;font-size:10px;line-height:13px;color:#a4501a;letter-spacing:0.55px;">1/1(0)</div>
<div class="b" style="left:510px;top:292px;width:59px;height:18px;background:#ffffff"></div>
<div class="t" style="left:510px;top:294.4px;width:59px;text-align:center;font-size:10px;line-height:13px;color:#666;letter-spacing:0.55px;">0/1(0)</div>
<div class="b" style="left:570px;top:292px;width:59px;height:18px;background:#ffffff"></div>
<div class="t" style="left:570px;top:294.4px;width:59px;text-align:center;font-size:10px;line-height:13px;color:#666;letter-spacing:0.55px;">0/1(0)</div>
<div class="b" style="left:630px;top:292px;width:59px;height:18px;background:#ffffff"></div>
<div class="t" style="left:630px;top:294.4px;width:59px;text-align:center;font-size:10px;line-height:13px;color:#666;letter-spacing:0.55px;">0/<span style="font-size:9.6px;margin:0 1.9px 0 2.1px;letter-spacing:0;position:relative;top:-1px">∞</span>(0)</div>
<div class="b" style="left:690px;top:292px;width:59px;height:18px;background:#ffffff"></div>
<div class="t" style="left:690px;top:294.4px;width:59px;text-align:center;font-size:10px;line-height:13px;color:#666;letter-spacing:0.55px;">0/1(0)</div>
<div class="b" style="left:750px;top:292px;width:59px;height:18px;background:#dddddd"></div>
<div class="t" style="left:750px;top:294.4px;width:59px;text-align:center;font-size:10px;line-height:13px;color:#666;letter-spacing:0.55px;">0/0</div>
<div class="b" style="left:810px;top:292px;width:59px;height:18px;background:#ffffff"></div>
<div class="t" style="left:810px;top:294.4px;width:59px;text-align:center;font-size:10px;line-height:13px;color:#666;letter-spacing:0.55px;">0/1(0)</div>
<div class="b" style="left:870px;top:292px;width:59px;height:18px;background:#dddddd"></div>
<div class="t" style="left:870px;top:294.4px;width:59px;text-align:center;font-size:10px;line-height:13px;color:#666;letter-spacing:0.55px;">0/0</div>
<div class="b" style="left:930px;top:292px;width:59px;height:18px;background:#dddddd"></div>
<div class="t" style="left:930px;top:294.4px;width:59px;text-align:center;font-size:10px;line-height:13px;color:#666;letter-spacing:0.55px;">0/0</div>
<div class="b" style="left:990px;top:292px;width:59px;height:18px;background:#dddddd"></div>
<div class="t" style="left:990px;top:294.4px;width:59px;text-align:center;font-size:10px;line-height:13px;color:#666;letter-spacing:0.55px;">0/0</div>
<div class="b" style="left:283px;top:311px;width:46px;height:19px;background:#efefef"></div>
<div class="t" style="left:283px;top:313.9px;width:46px;text-align:center;font-size:10px;line-height:13px;color:#666;letter-spacing:0.05px;">10:30</div>
<div class="b" style="left:330px;top:311px;width:59px;height:19px;background:rgb(237,108,0)"></div>
<div class="t" style="left:330px;top:313.9px;width:59px;text-align:center;font-size:10px;line-height:13px;color:#a4501a;letter-spacing:0.55px;">1/1(1)</div>
<div class="b" style="left:390px;top:311px;width:59px;height:19px;background:#dddddd"></div>
<div class="t" style="left:390px;top:313.9px;width:59px;text-align:center;font-size:10px;line-height:13px;color:#666;letter-spacing:0.55px;">0/0</div>
<div class="b" style="left:450px;top:311px;width:59px;height:19px;background:rgb(237,108,0)"></div>
<div class="t" style="left:450px;top:313.9px;width:59px;text-align:center;font-size:10px;line-height:13px;color:#a4501a;letter-spacing:0.55px;">1/1(0)</div>
<div class="b" style="left:510px;top:311px;width:59px;height:19px;background:#ffffff"></div>
<div class="t" style="left:510px;top:313.9px;width:59px;text-align:center;font-size:10px;line-height:13px;color:#666;letter-spacing:0.55px;">0/1(0)</div>
<div class="b" style="left:570px;top:311px;width:59px;height:19px;background:#ffffff"></div>
<div class="t" style="left:570px;top:313.9px;width:59px;text-align:center;font-size:10px;line-height:13px;color:#666;letter-spacing:0.55px;">0/1(0)</div>
<div class="b" style="left:630px;top:311px;width:59px;height:19px;background:#ffffff"></div>
<div class="t" style="left:630px;top:313.9px;width:59px;text-align:center;font-size:10px;line-height:13px;color:#666;letter-spacing:0.55px;">0/<span style="font-size:9.6px;margin:0 1.9px 0 2.1px;letter-spacing:0;position:relative;top:-1px">∞</span>(0)</div>
<div class="b" style="left:690px;top:311px;width:59px;height:19px;background:#ffffff"></div>
<div class="t" style="left:690px;top:313.9px;width:59px;text-align:center;font-size:10px;line-height:13px;color:#666;letter-spacing:0.55px;">0/1(0)</div>
<div class="b" style="left:750px;top:311px;width:59px;height:19px;background:#dddddd"></div>
<div class="t" style="left:750px;top:313.9px;width:59px;text-align:center;font-size:10px;line-height:13px;color:#666;letter-spacing:0.55px;">0/0</div>
<div class="b" style="left:810px;top:311px;width:59px;height:19px;background:#ffffff"></div>
<div class="t" style="left:810px;top:313.9px;width:59px;text-align:center;font-size:10px;line-height:13px;color:#666;letter-spacing:0.55px;">0/1(0)</div>
<div class="b" style="left:870px;top:311px;width:59px;height:19px;background:#dddddd"></div>
<div class="t" style="left:870px;top:313.9px;width:59px;text-align:center;font-size:10px;line-height:13px;color:#666;letter-spacing:0.55px;">0/0</div>
<div class="b" style="left:930px;top:311px;width:59px;height:19px;background:#dddddd"></div>
<div class="t" style="left:930px;top:313.9px;width:59px;text-align:center;font-size:10px;line-height:13px;color:#666;letter-spacing:0.55px;">0/0</div>
<div class="b" style="left:990px;top:311px;width:59px;height:19px;background:#dddddd"></div>
<div class="t" style="left:990px;top:313.9px;width:59px;text-align:center;font-size:10px;line-height:13px;color:#666;letter-spacing:0.55px;">0/0</div>
<div class="b" style="left:283px;top:331px;width:46px;height:18px;background:#efefef"></div>
<div class="t" style="left:283px;top:333.4px;width:46px;text-align:center;font-size:10px;line-height:13px;color:#666;letter-spacing:0.05px;">13:00</div>
<div class="b" style="left:330px;top:331px;width:59px;height:18px;background:rgb(237,108,0)"></div>
<div class="t" style="left:330px;top:333.4px;width:59px;text-align:center;font-size:10px;line-height:13px;color:#a4501a;letter-spacing:0.55px;">1/1(1)</div>
<div class="b" style="left:390px;top:331px;width:59px;height:18px;background:#dddddd"></div>
<div class="t" style="left:390px;top:333.4px;width:59px;text-align:center;font-size:10px;line-height:13px;color:#666;letter-spacing:0.55px;">0/0</div>
<div class="b" style="left:450px;top:331px;width:59px;height:18px;background:rgb(237,108,0)"></div>
<div class="t" style="left:450px;top:333.4px;width:59px;text-align:center;font-size:10px;line-height:13px;color:#a4501a;letter-spacing:0.55px;">1/1(0)</div>
<div class="b" style="left:510px;top:331px;width:59px;height:18px;background:#ffffff"></div>
<div class="t" style="left:510px;top:333.4px;width:59px;text-align:center;font-size:10px;line-height:13px;color:#666;letter-spacing:0.55px;">0/1(0)</div>
<div class="b" style="left:570px;top:331px;width:59px;height:18px;background:#ffffff"></div>
<div class="t" style="left:570px;top:333.4px;width:59px;text-align:center;font-size:10px;line-height:13px;color:#666;letter-spacing:0.55px;">0/1(0)</div>
<div class="b" style="left:630px;top:331px;width:59px;height:18px;background:#ffffff"></div>
<div class="t" style="left:630px;top:333.4px;width:59px;text-align:center;font-size:10px;line-height:13px;color:#666;letter-spacing:0.55px;">0/<span style="font-size:9.6px;margin:0 1.9px 0 2.1px;letter-spacing:0;position:relative;top:-1px">∞</span>(0)</div>
<div class="b" style="left:690px;top:331px;width:59px;height:18px;background:#ffffff"></div>
<div class="t" style="left:690px;top:333.4px;width:59px;text-align:center;font-size:10px;line-height:13px;color:#666;letter-spacing:0.55px;">0/1(0)</div>
<div class="b" style="left:750px;top:331px;width:59px;height:18px;background:#dddddd"></div>
<div class="t" style="left:750px;top:333.4px;width:59px;text-align:center;font-size:10px;line-height:13px;color:#666;letter-spacing:0.55px;">0/0</div>
<div class="b" style="left:810px;top:331px;width:59px;height:18px;background:#ffffff"></div>
<div class="t" style="left:810px;top:333.4px;width:59px;text-align:center;font-size:10px;line-height:13px;color:#666;letter-spacing:0.55px;">0/1(0)</div>
<div class="b" style="left:870px;top:331px;width:59px;height:18px;background:#dddddd"></div>
<div class="t" style="left:870px;top:333.4px;width:59px;text-align:center;font-size:10px;line-height:13px;color:#666;letter-spacing:0.55px;">0/0</div>
<div class="b" style="left:930px;top:331px;width:59px;height:18px;background:#dddddd"></div>
<div class="t" style="left:930px;top:333.4px;width:59px;text-align:center;font-size:10px;line-height:13px;color:#666;letter-spacing:0.55px;">0/0</div>
<div class="b" style="left:990px;top:331px;width:59px;height:18px;background:#dddddd"></div>
<div class="t" style="left:990px;top:333.4px;width:59px;text-align:center;font-size:10px;line-height:13px;color:#666;letter-spacing:0.55px;">0/0</div>
<div class="b" style="left:283px;top:350px;width:46px;height:18px;background:#efefef"></div>
<div class="t" style="left:283px;top:352.4px;width:46px;text-align:center;font-size:10px;line-height:13px;color:#666;letter-spacing:0.05px;">13:30</div>
<div class="b" style="left:330px;top:350px;width:59px;height:18px;background:#dddddd"></div>
<div class="t" style="left:330px;top:352.4px;width:59px;text-align:center;font-size:10px;line-height:13px;color:#666;letter-spacing:0.55px;">0/0</div>
<div class="b" style="left:390px;top:350px;width:59px;height:18px;background:#dddddd"></div>
<div class="t" style="left:390px;top:352.4px;width:59px;text-align:center;font-size:10px;line-height:13px;color:#666;letter-spacing:0.55px;">0/0</div>
<div class="b" style="left:450px;top:350px;width:59px;height:18px;background:#dddddd"></div>
<div class="t" style="left:450px;top:352.4px;width:59px;text-align:center;font-size:10px;line-height:13px;color:#666;letter-spacing:0.55px;">0/0</div>
<div class="b" style="left:510px;top:350px;width:59px;height:18px;background:#ffffff"></div>
<div class="t" style="left:510px;top:352.4px;width:59px;text-align:center;font-size:10px;line-height:13px;color:#666;letter-spacing:0.55px;">0/1(0)</div>
<div class="b" style="left:570px;top:350px;width:59px;height:18px;background:#ffffff"></div>
<div class="t" style="left:570px;top:352.4px;width:59px;text-align:center;font-size:10px;line-height:13px;color:#666;letter-spacing:0.55px;">0/1(0)</div>
<div class="b" style="left:630px;top:350px;width:59px;height:18px;background:#ffffff"></div>
<div class="t" style="left:630px;top:352.4px;width:59px;text-align:center;font-size:10px;line-height:13px;color:#666;letter-spacing:0.55px;">0/<span style="font-size:9.6px;margin:0 1.9px 0 2.1px;letter-spacing:0;position:relative;top:-1px">∞</span>(0)</div>
<div class="b" style="left:690px;top:350px;width:59px;height:18px;background:#ffffff"></div>
<div class="t" style="left:690px;top:352.4px;width:59px;text-align:center;font-size:10px;line-height:13px;color:#666;letter-spacing:0.55px;">0/1(0)</div>
<div class="b" style="left:750px;top:350px;width:59px;height:18px;background:#dddddd"></div>
<div class="t" style="left:750px;top:352.4px;width:59px;text-align:center;font-size:10px;line-height:13px;color:#666;letter-spacing:0.55px;">0/0</div>
<div class="b" style="left:810px;top:350px;width:59px;height:18px;background:#ffffff"></div>
<div class="t" style="left:810px;top:352.4px;width:59px;text-align:center;font-size:10px;line-height:13px;color:#666;letter-spacing:0.55px;">0/1(0)</div>
<div class="b" style="left:870px;top:350px;width:59px;height:18px;background:#dddddd"></div>
<div class="t" style="left:870px;top:352.4px;width:59px;text-align:center;font-size:10px;line-height:13px;color:#666;letter-spacing:0.55px;">0/0</div>
<div class="b" style="left:930px;top:350px;width:59px;height:18px;background:#dddddd"></div>
<div class="t" style="left:930px;top:352.4px;width:59px;text-align:center;font-size:10px;line-height:13px;color:#666;letter-spacing:0.55px;">0/0</div>
<div class="b" style="left:990px;top:350px;width:59px;height:18px;background:#dddddd"></div>
<div class="t" style="left:990px;top:352.4px;width:59px;text-align:center;font-size:10px;line-height:13px;color:#666;letter-spacing:0.55px;">0/0</div>
<div class="b" style="left:283px;top:369px;width:46px;height:19px;background:#efefef"></div>
<div class="t" style="left:283px;top:371.9px;width:46px;text-align:center;font-size:10px;line-height:13px;color:#666;letter-spacing:0.05px;">14:00</div>
<div class="b" style="left:330px;top:369px;width:59px;height:19px;background:rgb(237,108,0)"></div>
<div class="t" style="left:330px;top:371.9px;width:59px;text-align:center;font-size:10px;line-height:13px;color:#a4501a;letter-spacing:0.55px;">1/1(1)</div>
<div class="b" style="left:390px;top:369px;width:59px;height:19px;background:#dddddd"></div>
<div class="t" style="left:390px;top:371.9px;width:59px;text-align:center;font-size:10px;line-height:13px;color:#666;letter-spacing:0.55px;">0/0</div>
<div class="b" style="left:450px;top:369px;width:59px;height:19px;background:rgb(237,108,0)"></div>
<div class="t" style="left:450px;top:371.9px;width:59px;text-align:center;font-size:10px;line-height:13px;color:#a4501a;letter-spacing:0.55px;">1/1(0)</div>
<div class="b" style="left:510px;top:369px;width:59px;height:19px;background:#ffffff"></div>
<div class="t" style="left:510px;top:371.9px;width:59px;text-align:center;font-size:10px;line-height:13px;color:#666;letter-spacing:0.55px;">0/1(0)</div>
<div class="b" style="left:570px;top:369px;width:59px;height:19px;background:#ffffff"></div>
<div class="t" style="left:570px;top:371.9px;width:59px;text-align:center;font-size:10px;line-height:13px;color:#666;letter-spacing:0.55px;">0/1(0)</div>
<div class="b" style="left:630px;top:369px;width:59px;height:19px;background:#ffffff"></div>
<div class="t" style="left:630px;top:371.9px;width:59px;text-align:center;font-size:10px;line-height:13px;color:#666;letter-spacing:0.55px;">0/<span style="font-size:9.6px;margin:0 1.9px 0 2.1px;letter-spacing:0;position:relative;top:-1px">∞</span>(0)</div>
<div class="b" style="left:690px;top:369px;width:59px;height:19px;background:#ffffff"></div>
<div class="t" style="left:690px;top:371.9px;width:59px;text-align:center;font-size:10px;line-height:13px;color:#666;letter-spacing:0.55px;">0/1(0)</div>
<div class="b" style="left:750px;top:369px;width:59px;height:19px;background:#dddddd"></div>
<div class="t" style="left:750px;top:371.9px;width:59px;text-align:center;font-size:10px;line-height:13px;color:#666;letter-spacing:0.55px;">0/0</div>
<div class="b" style="left:810px;top:369px;width:59px;height:19px;background:#ffffff"></div>
<div class="t" style="left:810px;top:371.9px;width:59px;text-align:center;font-size:10px;line-height:13px;color:#666;letter-spacing:0.55px;">0/1(0)</div>
<div class="b" style="left:870px;top:369px;width:59px;height:19px;background:#dddddd"></div>
<div class="t" style="left:870px;top:371.9px;width:59px;text-align:center;font-size:10px;line-height:13px;color:#666;letter-spacing:0.55px;">0/0</div>
<div class="b" style="left:930px;top:369px;width:59px;height:19px;background:#dddddd"></div>
<div class="t" style="left:930px;top:371.9px;width:59px;text-align:center;font-size:10px;line-height:13px;color:#666;letter-spacing:0.55px;">0/0</div>
<div class="b" style="left:990px;top:369px;width:59px;height:19px;background:#dddddd"></div>
<div class="t" style="left:990px;top:371.9px;width:59px;text-align:center;font-size:10px;line-height:13px;color:#666;letter-spacing:0.55px;">0/0</div>
<div class="b" style="left:283px;top:389px;width:46px;height:18px;background:#efefef"></div>
<div class="t" style="left:283px;top:391.4px;width:46px;text-align:center;font-size:10px;line-height:13px;color:#666;letter-spacing:0.05px;">14:30</div>
<div class="b" style="left:330px;top:389px;width:59px;height:18px;background:#dddddd"></div>
<div class="t" style="left:330px;top:391.4px;width:59px;text-align:center;font-size:10px;line-height:13px;color:#666;letter-spacing:0.55px;">0/0</div>
<div class="b" style="left:390px;top:389px;width:59px;height:18px;background:#dddddd"></div>
<div class="t" style="left:390px;top:391.4px;width:59px;text-align:center;font-size:10px;line-height:13px;color:#666;letter-spacing:0.55px;">0/0</div>
<div class="b" style="left:450px;top:389px;width:59px;height:18px;background:#dddddd"></div>
<div class="t" style="left:450px;top:391.4px;width:59px;text-align:center;font-size:10px;line-height:13px;color:#666;letter-spacing:0.55px;">0/0</div>
<div class="b" style="left:510px;top:389px;width:59px;height:18px;background:#ffffff"></div>
<div class="t" style="left:510px;top:391.4px;width:59px;text-align:center;font-size:10px;line-height:13px;color:#666;letter-spacing:0.55px;">0/1(0)</div>
<div class="b" style="left:570px;top:389px;width:59px;height:18px;background:#ffffff"></div>
<div class="t" style="left:570px;top:391.4px;width:59px;text-align:center;font-size:10px;line-height:13px;color:#666;letter-spacing:0.55px;">0/1(0)</div>
<div class="b" style="left:630px;top:389px;width:59px;height:18px;background:#ffffff"></div>
<div class="t" style="left:630px;top:391.4px;width:59px;text-align:center;font-size:10px;line-height:13px;color:#666;letter-spacing:0.55px;">0/<span style="font-size:9.6px;margin:0 1.9px 0 2.1px;letter-spacing:0;position:relative;top:-1px">∞</span>(0)</div>
<div class="b" style="left:690px;top:389px;width:59px;height:18px;background:#ffffff"></div>
<div class="t" style="left:690px;top:391.4px;width:59px;text-align:center;font-size:10px;line-height:13px;color:#666;letter-spacing:0.55px;">0/1(0)</div>
<div class="b" style="left:750px;top:389px;width:59px;height:18px;background:#dddddd"></div>
<div class="t" style="left:750px;top:391.4px;width:59px;text-align:center;font-size:10px;line-height:13px;color:#666;letter-spacing:0.55px;">0/0</div>
<div class="b" style="left:810px;top:389px;width:59px;height:18px;background:#ffffff"></div>
<div class="t" style="left:810px;top:391.4px;width:59px;text-align:center;font-size:10px;line-height:13px;color:#666;letter-spacing:0.55px;">0/1(0)</div>
<div class="b" style="left:870px;top:389px;width:59px;height:18px;background:#dddddd"></div>
<div class="t" style="left:870px;top:391.4px;width:59px;text-align:center;font-size:10px;line-height:13px;color:#666;letter-spacing:0.55px;">0/0</div>
<div class="b" style="left:930px;top:389px;width:59px;height:18px;background:#dddddd"></div>
<div class="t" style="left:930px;top:391.4px;width:59px;text-align:center;font-size:10px;line-height:13px;color:#666;letter-spacing:0.55px;">0/0</div>
<div class="b" style="left:990px;top:389px;width:59px;height:18px;background:#dddddd"></div>
<div class="t" style="left:990px;top:391.4px;width:59px;text-align:center;font-size:10px;line-height:13px;color:#666;letter-spacing:0.55px;">0/0</div>
<div class="b" style="left:283px;top:408px;width:46px;height:18px;background:#efefef"></div>
<div class="t" style="left:283px;top:410.4px;width:46px;text-align:center;font-size:10px;line-height:13px;color:#666;letter-spacing:0.05px;">15:00</div>
<div class="b" style="left:330px;top:408px;width:59px;height:18px;background:rgb(237,108,0)"></div>
<div class="t" style="left:330px;top:410.4px;width:59px;text-align:center;font-size:10px;line-height:13px;color:#a4501a;letter-spacing:0.55px;">1/1(1)</div>
<div class="b" style="left:390px;top:408px;width:59px;height:18px;background:#dddddd"></div>
<div class="t" style="left:390px;top:410.4px;width:59px;text-align:center;font-size:10px;line-height:13px;color:#666;letter-spacing:0.55px;">0/0</div>
<div class="b" style="left:450px;top:408px;width:59px;height:18px;background:rgb(237,108,0)"></div>
<div class="t" style="left:450px;top:410.4px;width:59px;text-align:center;font-size:10px;line-height:13px;color:#a4501a;letter-spacing:0.55px;">1/1(0)</div>
<div class="b" style="left:510px;top:408px;width:59px;height:18px;background:#ffffff"></div>
<div class="t" style="left:510px;top:410.4px;width:59px;text-align:center;font-size:10px;line-height:13px;color:#666;letter-spacing:0.55px;">0/1(0)</div>
<div class="b" style="left:570px;top:408px;width:59px;height:18px;background:#ffffff"></div>
<div class="t" style="left:570px;top:410.4px;width:59px;text-align:center;font-size:10px;line-height:13px;color:#666;letter-spacing:0.55px;">0/1(0)</div>
<div class="b" style="left:630px;top:408px;width:59px;height:18px;background:#ffffff"></div>
<div class="t" style="left:630px;top:410.4px;width:59px;text-align:center;font-size:10px;line-height:13px;color:#666;letter-spacing:0.55px;">0/<span style="font-size:9.6px;margin:0 1.9px 0 2.1px;letter-spacing:0;position:relative;top:-1px">∞</span>(0)</div>
<div class="b" style="left:690px;top:408px;width:59px;height:18px;background:#ffffff"></div>
<div class="t" style="left:690px;top:410.4px;width:59px;text-align:center;font-size:10px;line-height:13px;color:#666;letter-spacing:0.55px;">0/1(0)</div>
<div class="b" style="left:750px;top:408px;width:59px;height:18px;background:#dddddd"></div>
<div class="t" style="left:750px;top:410.4px;width:59px;text-align:center;font-size:10px;line-height:13px;color:#666;letter-spacing:0.55px;">0/0</div>
<div class="b" style="left:810px;top:408px;width:59px;height:18px;background:#ffffff"></div>
<div class="t" style="left:810px;top:410.4px;width:59px;text-align:center;font-size:10px;line-height:13px;color:#666;letter-spacing:0.55px;">0/1(0)</div>
<div class="b" style="left:870px;top:408px;width:59px;height:18px;background:#dddddd"></div>
<div class="t" style="left:870px;top:410.4px;width:59px;text-align:center;font-size:10px;line-height:13px;color:#666;letter-spacing:0.55px;">0/0</div>
<div class="b" style="left:930px;top:408px;width:59px;height:18px;background:#dddddd"></div>
<div class="t" style="left:930px;top:410.4px;width:59px;text-align:center;font-size:10px;line-height:13px;color:#666;letter-spacing:0.55px;">0/0</div>
<div class="b" style="left:990px;top:408px;width:59px;height:18px;background:#dddddd"></div>
<div class="t" style="left:990px;top:410.4px;width:59px;text-align:center;font-size:10px;line-height:13px;color:#666;letter-spacing:0.55px;">0/0</div>
<div class="b" style="left:283px;top:427px;width:46px;height:19px;background:#efefef"></div>
<div class="t" style="left:283px;top:429.9px;width:46px;text-align:center;font-size:10px;line-height:13px;color:#666;letter-spacing:0.05px;">15:30</div>
<div class="b" style="left:330px;top:427px;width:59px;height:19px;background:#dddddd"></div>
<div class="t" style="left:330px;top:429.9px;width:59px;text-align:center;font-size:10px;line-height:13px;color:#666;letter-spacing:0.55px;">0/0</div>
<div class="b" style="left:390px;top:427px;width:59px;height:19px;background:#dddddd"></div>
<div class="t" style="left:390px;top:429.9px;width:59px;text-align:center;font-size:10px;line-height:13px;color:#666;letter-spacing:0.55px;">0/0</div>
<div class="b" style="left:450px;top:427px;width:59px;height:19px;background:#dddddd"></div>
<div class="t" style="left:450px;top:429.9px;width:59px;text-align:center;font-size:10px;line-height:13px;color:#666;letter-spacing:0.55px;">0/0</div>
<div class="b" style="left:510px;top:427px;width:59px;height:19px;background:#ffffff"></div>
<div class="t" style="left:510px;top:429.9px;width:59px;text-align:center;font-size:10px;line-height:13px;color:#666;letter-spacing:0.55px;">0/1(0)</div>
<div class="b" style="left:570px;top:427px;width:59px;height:19px;background:#ffffff"></div>
<div class="t" style="left:570px;top:429.9px;width:59px;text-align:center;font-size:10px;line-height:13px;color:#666;letter-spacing:0.55px;">0/1(0)</div>
<div class="b" style="left:630px;top:427px;width:59px;height:19px;background:rgb(253,240,230)"></div>
<div class="t" style="left:630px;top:429.9px;width:59px;text-align:center;font-size:10px;line-height:13px;color:#666;letter-spacing:0.55px;">1/<span style="font-size:9.6px;margin:0 1.9px 0 2.1px;letter-spacing:0;position:relative;top:-1px">∞</span>(1)</div>
<div class="b" style="left:690px;top:427px;width:59px;height:19px;background:#ffffff"></div>
<div class="t" style="left:690px;top:429.9px;width:59px;text-align:center;font-size:10px;line-height:13px;color:#666;letter-spacing:0.55px;">0/1(0)</div>
<div class="b" style="left:750px;top:427px;width:59px;height:19px;background:#dddddd"></div>
<div class="t" style="left:750px;top:429.9px;width:59px;text-align:center;font-size:10px;line-height:13px;color:#666;letter-spacing:0.55px;">0/0</div>
<div class="b" style="left:810px;top:427px;width:59px;height:19px;background:#ffffff"></div>
<div class="t" style="left:810px;top:429.9px;width:59px;text-align:center;font-size:10px;line-height:13px;color:#666;letter-spacing:0.55px;">0/1(0)</div>
<div class="b" style="left:870px;top:427px;width:59px;height:19px;background:#dddddd"></div>
<div class="t" style="left:870px;top:429.9px;width:59px;text-align:center;font-size:10px;line-height:13px;color:#666;letter-spacing:0.55px;">0/0</div>
<div class="b" style="left:930px;top:427px;width:59px;height:19px;background:#dddddd"></div>
<div class="t" style="left:930px;top:429.9px;width:59px;text-align:center;font-size:10px;line-height:13px;color:#666;letter-spacing:0.55px;">0/0</div>
<div class="b" style="left:990px;top:427px;width:59px;height:19px;background:#dddddd"></div>
<div class="t" style="left:990px;top:429.9px;width:59px;text-align:center;font-size:10px;line-height:13px;color:#666;letter-spacing:0.55px;">0/0</div>
<div class="b" style="left:283px;top:447px;width:46px;height:18px;background:#efefef"></div>
<div class="t" style="left:283px;top:449.4px;width:46px;text-align:center;font-size:10px;line-height:13px;color:#666;letter-spacing:0.05px;">16:00</div>
<div class="b" style="left:330px;top:447px;width:59px;height:18px;background:#dddddd"></div>
<div class="t" style="left:330px;top:449.4px;width:59px;text-align:center;font-size:10px;line-height:13px;color:#666;letter-spacing:0.55px;">0/0</div>
<div class="b" style="left:390px;top:447px;width:59px;height:18px;background:#dddddd"></div>
<div class="t" style="left:390px;top:449.4px;width:59px;text-align:center;font-size:10px;line-height:13px;color:#666;letter-spacing:0.55px;">0/0</div>
<div class="b" style="left:450px;top:447px;width:59px;height:18px;background:#dddddd"></div>
<div class="t" style="left:450px;top:449.4px;width:59px;text-align:center;font-size:10px;line-height:13px;color:#666;letter-spacing:0.55px;">0/0</div>
<div class="b" style="left:510px;top:447px;width:59px;height:18px;background:#ffffff"></div>
<div class="t" style="left:510px;top:449.4px;width:59px;text-align:center;font-size:10px;line-height:13px;color:#666;letter-spacing:0.55px;">0/1(0)</div>
<div class="b" style="left:570px;top:447px;width:59px;height:18px;background:#ffffff"></div>
<div class="t" style="left:570px;top:449.4px;width:59px;text-align:center;font-size:10px;line-height:13px;color:#666;letter-spacing:0.55px;">0/1(0)</div>
<div class="b" style="left:630px;top:447px;width:59px;height:18px;background:#ffffff"></div>
<div class="t" style="left:630px;top:449.4px;width:59px;text-align:center;font-size:10px;line-height:13px;color:#666;letter-spacing:0.55px;">0/<span style="font-size:9.6px;margin:0 1.9px 0 2.1px;letter-spacing:0;position:relative;top:-1px">∞</span>(0)</div>
<div class="b" style="left:690px;top:447px;width:59px;height:18px;background:#ffffff"></div>
<div class="t" style="left:690px;top:449.4px;width:59px;text-align:center;font-size:10px;line-height:13px;color:#666;letter-spacing:0.55px;">0/1(0)</div>
<div class="b" style="left:750px;top:447px;width:59px;height:18px;background:#dddddd"></div>
<div class="t" style="left:750px;top:449.4px;width:59px;text-align:center;font-size:10px;line-height:13px;color:#666;letter-spacing:0.55px;">0/0</div>
<div class="b" style="left:810px;top:447px;width:59px;height:18px;background:#ffffff"></div>
<div class="t" style="left:810px;top:449.4px;width:59px;text-align:center;font-size:10px;line-height:13px;color:#666;letter-spacing:0.55px;">0/1(0)</div>
<div class="b" style="left:870px;top:447px;width:59px;height:18px;background:#dddddd"></div>
<div class="t" style="left:870px;top:449.4px;width:59px;text-align:center;font-size:10px;line-height:13px;color:#666;letter-spacing:0.55px;">0/0</div>
<div class="b" style="left:930px;top:447px;width:59px;height:18px;background:#dddddd"></div>
<div class="t" style="left:930px;top:449.4px;width:59px;text-align:center;font-size:10px;line-height:13px;color:#666;letter-spacing:0.55px;">0/0</div>
<div class="b" style="left:990px;top:447px;width:59px;height:18px;background:#dddddd"></div>
<div class="t" style="left:990px;top:449.4px;width:59px;text-align:center;font-size:10px;line-height:13px;color:#666;letter-spacing:0.55px;">0/0</div>
<div class="b" style="left:283px;top:466px;width:46px;height:19px;background:#efefef"></div>
<div class="t" style="left:283px;top:468.9px;width:46px;text-align:center;font-size:10px;line-height:13px;color:#666;letter-spacing:0.05px;">16:30</div>
<div class="b" style="left:330px;top:466px;width:59px;height:19px;background:#dddddd"></div>
<div class="t" style="left:330px;top:468.9px;width:59px;text-align:center;font-size:10px;line-height:13px;color:#666;letter-spacing:0.55px;">0/0</div>
<div class="b" style="left:390px;top:466px;width:59px;height:19px;background:#dddddd"></div>
<div class="t" style="left:390px;top:468.9px;width:59px;text-align:center;font-size:10px;line-height:13px;color:#666;letter-spacing:0.55px;">0/0</div>
<div class="b" style="left:450px;top:466px;width:59px;height:19px;background:#dddddd"></div>
<div class="t" style="left:450px;top:468.9px;width:59px;text-align:center;font-size:10px;line-height:13px;color:#666;letter-spacing:0.55px;">0/0</div>
<div class="b" style="left:510px;top:466px;width:59px;height:19px;background:#ffffff"></div>
<div class="t" style="left:510px;top:468.9px;width:59px;text-align:center;font-size:10px;line-height:13px;color:#666;letter-spacing:0.55px;">0/1(0)</div>
<div class="b" style="left:570px;top:466px;width:59px;height:19px;background:#ffffff"></div>
<div class="t" style="left:570px;top:468.9px;width:59px;text-align:center;font-size:10px;line-height:13px;color:#666;letter-spacing:0.55px;">0/1(0)</div>
<div class="b" style="left:630px;top:466px;width:59px;height:19px;background:rgb(253,240,230)"></div>
<div class="t" style="left:630px;top:468.9px;width:59px;text-align:center;font-size:10px;line-height:13px;color:#666;letter-spacing:0.55px;">1/<span style="font-size:9.6px;margin:0 1.9px 0 2.1px;letter-spacing:0;position:relative;top:-1px">∞</span>(1)</div>
<div class="b" style="left:690px;top:466px;width:59px;height:19px;background:#ffffff"></div>
<div class="t" style="left:690px;top:468.9px;width:59px;text-align:center;font-size:10px;line-height:13px;color:#666;letter-spacing:0.55px;">0/1(0)</div>
<div class="b" style="left:750px;top:466px;width:59px;height:19px;background:#dddddd"></div>
<div class="t" style="left:750px;top:468.9px;width:59px;text-align:center;font-size:10px;line-height:13px;color:#666;letter-spacing:0.55px;">0/0</div>
<div class="b" style="left:810px;top:466px;width:59px;height:19px;background:#ffffff"></div>
<div class="t" style="left:810px;top:468.9px;width:59px;text-align:center;font-size:10px;line-height:13px;color:#666;letter-spacing:0.55px;">0/1(0)</div>
<div class="b" style="left:870px;top:466px;width:59px;height:19px;background:#dddddd"></div>
<div class="t" style="left:870px;top:468.9px;width:59px;text-align:center;font-size:10px;line-height:13px;color:#666;letter-spacing:0.55px;">0/0</div>
<div class="b" style="left:930px;top:466px;width:59px;height:19px;background:#dddddd"></div>
<div class="t" style="left:930px;top:468.9px;width:59px;text-align:center;font-size:10px;line-height:13px;color:#666;letter-spacing:0.55px;">0/0</div>
<div class="b" style="left:990px;top:466px;width:59px;height:19px;background:#dddddd"></div>
<div class="t" style="left:990px;top:468.9px;width:59px;text-align:center;font-size:10px;line-height:13px;color:#666;letter-spacing:0.55px;">0/0</div>
<div class="b" style="left:283px;top:486px;width:46px;height:18px;background:#efefef"></div>
<div class="t" style="left:283px;top:488.4px;width:46px;text-align:center;font-size:10px;line-height:13px;color:#666;letter-spacing:0.05px;">17:00</div>
<div class="b" style="left:330px;top:486px;width:59px;height:18px;background:#dddddd"></div>
<div class="t" style="left:330px;top:488.4px;width:59px;text-align:center;font-size:10px;line-height:13px;color:#666;letter-spacing:0.55px;">0/0</div>
<div class="b" style="left:390px;top:486px;width:59px;height:18px;background:#dddddd"></div>
<div class="t" style="left:390px;top:488.4px;width:59px;text-align:center;font-size:10px;line-height:13px;color:#666;letter-spacing:0.55px;">0/0</div>
<div class="b" style="left:450px;top:486px;width:59px;height:18px;background:#dddddd"></div>
<div class="t" style="left:450px;top:488.4px;width:59px;text-align:center;font-size:10px;line-height:13px;color:#666;letter-spacing:0.55px;">0/0</div>
<div class="b" style="left:510px;top:486px;width:59px;height:18px;background:#ffffff"></div>
<div class="t" style="left:510px;top:488.4px;width:59px;text-align:center;font-size:10px;line-height:13px;color:#666;letter-spacing:0.55px;">0/1(0)</div>
<div class="b" style="left:570px;top:486px;width:59px;height:18px;background:#ffffff"></div>
<div class="t" style="left:570px;top:488.4px;width:59px;text-align:center;font-size:10px;line-height:13px;color:#666;letter-spacing:0.55px;">0/1(0)</div>
<div class="b" style="left:630px;top:486px;width:59px;height:18px;background:#ffffff"></div>
<div class="t" style="left:630px;top:488.4px;width:59px;text-align:center;font-size:10px;line-height:13px;color:#666;letter-spacing:0.55px;">0/<span style="font-size:9.6px;margin:0 1.9px 0 2.1px;letter-spacing:0;position:relative;top:-1px">∞</span>(0)</div>
<div class="b" style="left:690px;top:486px;width:59px;height:18px;background:#ffffff"></div>
<div class="t" style="left:690px;top:488.4px;width:59px;text-align:center;font-size:10px;line-height:13px;color:#666;letter-spacing:0.55px;">0/1(0)</div>
<div class="b" style="left:750px;top:486px;width:59px;height:18px;background:#dddddd"></div>
<div class="t" style="left:750px;top:488.4px;width:59px;text-align:center;font-size:10px;line-height:13px;color:#666;letter-spacing:0.55px;">0/0</div>
<div class="b" style="left:810px;top:486px;width:59px;height:18px;background:#ffffff"></div>
<div class="t" style="left:810px;top:488.4px;width:59px;text-align:center;font-size:10px;line-height:13px;color:#666;letter-spacing:0.55px;">0/1(0)</div>
<div class="b" style="left:870px;top:486px;width:59px;height:18px;background:#dddddd"></div>
<div class="t" style="left:870px;top:488.4px;width:59px;text-align:center;font-size:10px;line-height:13px;color:#666;letter-spacing:0.55px;">0/0</div>
<div class="b" style="left:930px;top:486px;width:59px;height:18px;background:#dddddd"></div>
<div class="t" style="left:930px;top:488.4px;width:59px;text-align:center;font-size:10px;line-height:13px;color:#666;letter-spacing:0.55px;">0/0</div>
<div class="b" style="left:990px;top:486px;width:59px;height:18px;background:#dddddd"></div>
<div class="t" style="left:990px;top:488.4px;width:59px;text-align:center;font-size:10px;line-height:13px;color:#666;letter-spacing:0.55px;">0/0</div>
<div class="b" style="left:283px;top:505px;width:46px;height:18px;background:#efefef"></div>
<div class="t" style="left:283px;top:507.4px;width:46px;text-align:center;font-size:10px;line-height:13px;color:#666;letter-spacing:0.05px;">17:30</div>
<div class="b" style="left:330px;top:505px;width:59px;height:18px;background:#dddddd"></div>
<div class="t" style="left:330px;top:507.4px;width:59px;text-align:center;font-size:10px;line-height:13px;color:#666;letter-spacing:0.55px;">0/0</div>
<div class="b" style="left:390px;top:505px;width:59px;height:18px;background:#dddddd"></div>
<div class="t" style="left:390px;top:507.4px;width:59px;text-align:center;font-size:10px;line-height:13px;color:#666;letter-spacing:0.55px;">0/0</div>
<div class="b" style="left:450px;top:505px;width:59px;height:18px;background:#dddddd"></div>
<div class="t" style="left:450px;top:507.4px;width:59px;text-align:center;font-size:10px;line-height:13px;color:#666;letter-spacing:0.55px;">0/0</div>
<div class="b" style="left:510px;top:505px;width:59px;height:18px;background:#ffffff"></div>
<div class="t" style="left:510px;top:507.4px;width:59px;text-align:center;font-size:10px;line-height:13px;color:#666;letter-spacing:0.55px;">0/1(0)</div>
<div class="b" style="left:570px;top:505px;width:59px;height:18px;background:#ffffff"></div>
<div class="t" style="left:570px;top:507.4px;width:59px;text-align:center;font-size:10px;line-height:13px;color:#666;letter-spacing:0.55px;">0/1(0)</div>
<div class="b" style="left:630px;top:505px;width:59px;height:18px;background:#ffffff"></div>
<div class="t" style="left:630px;top:507.4px;width:59px;text-align:center;font-size:10px;line-height:13px;color:#666;letter-spacing:0.55px;">0/<span style="font-size:9.6px;margin:0 1.9px 0 2.1px;letter-spacing:0;position:relative;top:-1px">∞</span>(0)</div>
<div class="b" style="left:690px;top:505px;width:59px;height:18px;background:#dddddd"></div>
<div class="t" style="left:690px;top:507.4px;width:59px;text-align:center;font-size:10px;line-height:13px;color:#666;letter-spacing:0.55px;">0/0</div>
<div class="b" style="left:750px;top:505px;width:59px;height:18px;background:#dddddd"></div>
<div class="t" style="left:750px;top:507.4px;width:59px;text-align:center;font-size:10px;line-height:13px;color:#666;letter-spacing:0.55px;">0/0</div>
<div class="b" style="left:810px;top:505px;width:59px;height:18px;background:#ffffff"></div>
<div class="t" style="left:810px;top:507.4px;width:59px;text-align:center;font-size:10px;line-height:13px;color:#666;letter-spacing:0.55px;">0/1(0)</div>
<div class="b" style="left:870px;top:505px;width:59px;height:18px;background:#dddddd"></div>
<div class="t" style="left:870px;top:507.4px;width:59px;text-align:center;font-size:10px;line-height:13px;color:#666;letter-spacing:0.55px;">0/0</div>
<div class="b" style="left:930px;top:505px;width:59px;height:18px;background:#dddddd"></div>
<div class="t" style="left:930px;top:507.4px;width:59px;text-align:center;font-size:10px;line-height:13px;color:#666;letter-spacing:0.55px;">0/0</div>
<div class="b" style="left:990px;top:505px;width:59px;height:18px;background:#dddddd"></div>
<div class="t" style="left:990px;top:507.4px;width:59px;text-align:center;font-size:10px;line-height:13px;color:#666;letter-spacing:0.55px;">0/0</div>
<div class="b" style="left:283px;top:524px;width:46px;height:19px;background:#efefef"></div>
<div class="t" style="left:283px;top:526.9px;width:46px;text-align:center;font-size:10px;line-height:13px;color:#666;letter-spacing:0.05px;">18:00</div>
<div class="b" style="left:330px;top:524px;width:59px;height:19px;background:#dddddd"></div>
<div class="t" style="left:330px;top:526.9px;width:59px;text-align:center;font-size:10px;line-height:13px;color:#666;letter-spacing:0.55px;">0/0</div>
<div class="b" style="left:390px;top:524px;width:59px;height:19px;background:#dddddd"></div>
<div class="t" style="left:390px;top:526.9px;width:59px;text-align:center;font-size:10px;line-height:13px;color:#666;letter-spacing:0.55px;">0/0</div>
<div class="b" style="left:450px;top:524px;width:59px;height:19px;background:#dddddd"></div>
<div class="t" style="left:450px;top:526.9px;width:59px;text-align:center;font-size:10px;line-height:13px;color:#666;letter-spacing:0.55px;">0/0</div>
<div class="b" style="left:510px;top:524px;width:59px;height:19px;background:#ffffff"></div>
<div class="t" style="left:510px;top:526.9px;width:59px;text-align:center;font-size:10px;line-height:13px;color:#666;letter-spacing:0.55px;">0/1(0)</div>
<div class="b" style="left:570px;top:524px;width:59px;height:19px;background:#ffffff"></div>
<div class="t" style="left:570px;top:526.9px;width:59px;text-align:center;font-size:10px;line-height:13px;color:#666;letter-spacing:0.55px;">0/1(0)</div>
<div class="b" style="left:630px;top:524px;width:59px;height:19px;background:#ffffff"></div>
<div class="t" style="left:630px;top:526.9px;width:59px;text-align:center;font-size:10px;line-height:13px;color:#666;letter-spacing:0.55px;">0/<span style="font-size:9.6px;margin:0 1.9px 0 2.1px;letter-spacing:0;position:relative;top:-1px">∞</span>(0)</div>
<div class="b" style="left:690px;top:524px;width:59px;height:19px;background:#dddddd"></div>
<div class="t" style="left:690px;top:526.9px;width:59px;text-align:center;font-size:10px;line-height:13px;color:#666;letter-spacing:0.55px;">0/0</div>
<div class="b" style="left:750px;top:524px;width:59px;height:19px;background:#dddddd"></div>
<div class="t" style="left:750px;top:526.9px;width:59px;text-align:center;font-size:10px;line-height:13px;color:#666;letter-spacing:0.55px;">0/0</div>
<div class="b" style="left:810px;top:524px;width:59px;height:19px;background:#ffffff"></div>
<div class="t" style="left:810px;top:526.9px;width:59px;text-align:center;font-size:10px;line-height:13px;color:#666;letter-spacing:0.55px;">0/1(0)</div>
<div class="b" style="left:870px;top:524px;width:59px;height:19px;background:#dddddd"></div>
<div class="t" style="left:870px;top:526.9px;width:59px;text-align:center;font-size:10px;line-height:13px;color:#666;letter-spacing:0.55px;">0/0</div>
<div class="b" style="left:930px;top:524px;width:59px;height:19px;background:#dddddd"></div>
<div class="t" style="left:930px;top:526.9px;width:59px;text-align:center;font-size:10px;line-height:13px;color:#666;letter-spacing:0.55px;">0/0</div>
<div class="b" style="left:990px;top:524px;width:59px;height:19px;background:#dddddd"></div>
<div class="t" style="left:990px;top:526.9px;width:59px;text-align:center;font-size:10px;line-height:13px;color:#666;letter-spacing:0.55px;">0/0</div>
<div class="b" style="left:282px;top:168px;width:768px;height:1px;background:#a9a9a9"></div>
<div class="b" style="left:282px;top:212px;width:768px;height:1px;background:#a9a9a9"></div>
<div class="b" style="left:282px;top:168px;width:1px;height:44px;background:#a9a9a9"></div>
<div class="b" style="left:282px;top:214px;width:1px;height:330px;background:#a9a9a9"></div>
<div class="b" style="left:329px;top:168px;width:1px;height:44px;background:#a9a9a9"></div>
<div class="b" style="left:329px;top:214px;width:1px;height:330px;background:#a9a9a9"></div>
<div class="b" style="left:389px;top:168px;width:1px;height:44px;background:#a9a9a9"></div>
<div class="b" style="left:389px;top:214px;width:1px;height:330px;background:#a9a9a9"></div>
<div class="b" style="left:449px;top:168px;width:1px;height:44px;background:#a9a9a9"></div>
<div class="b" style="left:449px;top:214px;width:1px;height:330px;background:#a9a9a9"></div>
<div class="b" style="left:509px;top:168px;width:1px;height:44px;background:#a9a9a9"></div>
<div class="b" style="left:509px;top:214px;width:1px;height:330px;background:#a9a9a9"></div>
<div class="b" style="left:569px;top:168px;width:1px;height:44px;background:#a9a9a9"></div>
<div class="b" style="left:569px;top:214px;width:1px;height:330px;background:#a9a9a9"></div>
<div class="b" style="left:629px;top:168px;width:1px;height:44px;background:#a9a9a9"></div>
<div class="b" style="left:629px;top:214px;width:1px;height:330px;background:#a9a9a9"></div>
<div class="b" style="left:689px;top:168px;width:1px;height:44px;background:#a9a9a9"></div>
<div class="b" style="left:689px;top:214px;width:1px;height:330px;background:#a9a9a9"></div>
<div class="b" style="left:749px;top:168px;width:1px;height:44px;background:#a9a9a9"></div>
<div class="b" style="left:749px;top:214px;width:1px;height:330px;background:#a9a9a9"></div>
<div class="b" style="left:809px;top:168px;width:1px;height:44px;background:#a9a9a9"></div>
<div class="b" style="left:809px;top:214px;width:1px;height:330px;background:#a9a9a9"></div>
<div class="b" style="left:869px;top:168px;width:1px;height:44px;background:#a9a9a9"></div>
<div class="b" style="left:869px;top:214px;width:1px;height:330px;background:#a9a9a9"></div>
<div class="b" style="left:929px;top:168px;width:1px;height:44px;background:#a9a9a9"></div>
<div class="b" style="left:929px;top:214px;width:1px;height:330px;background:#a9a9a9"></div>
<div class="b" style="left:989px;top:168px;width:1px;height:44px;background:#a9a9a9"></div>
<div class="b" style="left:989px;top:214px;width:1px;height:330px;background:#a9a9a9"></div>
<div class="b" style="left:1049px;top:168px;width:1px;height:44px;background:#a9a9a9"></div>
<div class="b" style="left:1049px;top:214px;width:1px;height:330px;background:#a9a9a9"></div>
<div class="b" style="left:282px;top:233px;width:768px;height:1px;background:#a9a9a9"></div>
<div class="b" style="left:282px;top:252px;width:768px;height:1px;background:#a9a9a9"></div>
<div class="b" style="left:282px;top:271px;width:768px;height:1px;background:#a9a9a9"></div>
<div class="b" style="left:282px;top:291px;width:768px;height:1px;background:#a9a9a9"></div>
<div class="b" style="left:282px;top:310px;width:768px;height:1px;background:#a9a9a9"></div>
<div class="b" style="left:282px;top:330px;width:768px;height:1px;background:#a9a9a9"></div>
<div class="b" style="left:282px;top:349px;width:768px;height:1px;background:#a9a9a9"></div>
<div class="b" style="left:282px;top:368px;width:768px;height:1px;background:#a9a9a9"></div>
<div class="b" style="left:282px;top:388px;width:768px;height:1px;background:#a9a9a9"></div>
<div class="b" style="left:282px;top:407px;width:768px;height:1px;background:#a9a9a9"></div>
<div class="b" style="left:282px;top:426px;width:768px;height:1px;background:#a9a9a9"></div>
<div class="b" style="left:282px;top:446px;width:768px;height:1px;background:#a9a9a9"></div>
<div class="b" style="left:282px;top:465px;width:768px;height:1px;background:#a9a9a9"></div>
<div class="b" style="left:282px;top:485px;width:768px;height:1px;background:#a9a9a9"></div>
<div class="b" style="left:282px;top:504px;width:768px;height:1px;background:#a9a9a9"></div>
<div class="b" style="left:282px;top:523px;width:768px;height:1px;background:#a9a9a9"></div>
<div class="b" style="left:282px;top:543px;width:768px;height:1px;background:#a9a9a9"></div>
</body></html>
